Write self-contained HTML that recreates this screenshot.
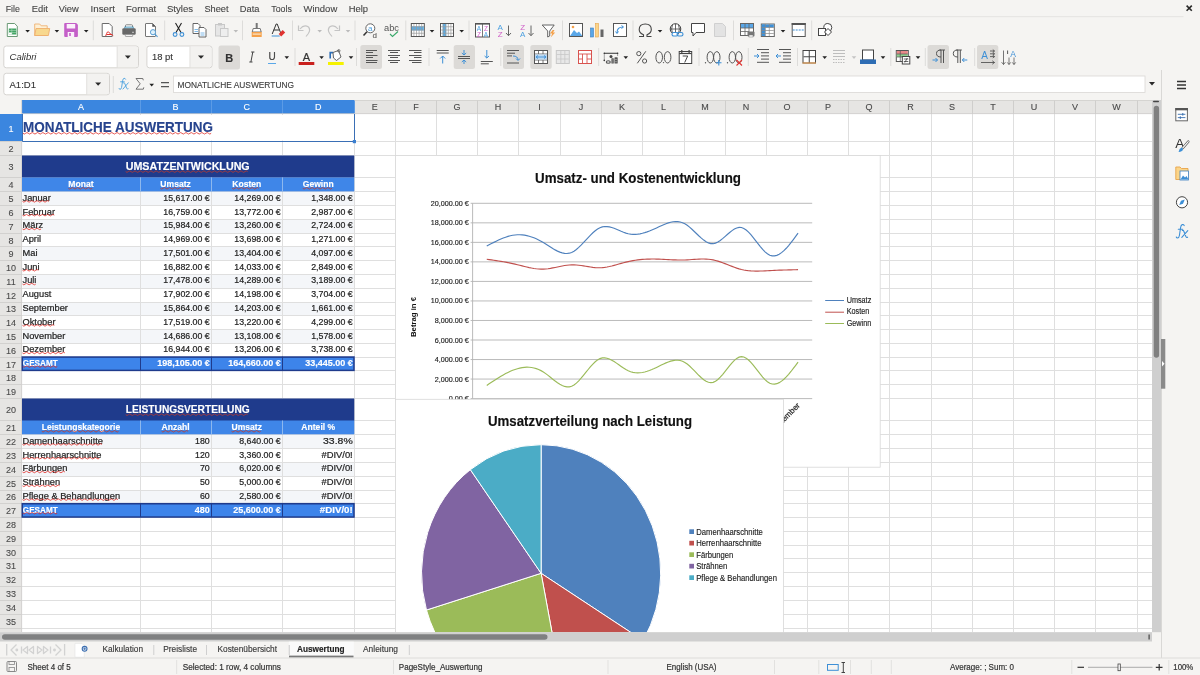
<!DOCTYPE html>
<html><head><meta charset="utf-8"><style>
html,body{margin:0;padding:0;background:#f5f4f2;}
body{width:1200px;height:675px;overflow:hidden;}
svg{display:block;font-family:"Liberation Sans",sans-serif;will-change:transform;}
</style></head><body>
<svg width="1200" height="675" viewBox="0 0 1200 675">
<rect x="0.00" y="0.00" width="1200.00" height="675.00" fill="#f5f4f2" />
<text x="5.70" y="11.70" font-size="8.8" fill="#454545" text-anchor="start" stroke="#454545" stroke-width="0.1" >File</text>
<text x="31.70" y="11.70" font-size="8.8" fill="#454545" text-anchor="start" textLength="16.20" lengthAdjust="spacingAndGlyphs" stroke="#454545" stroke-width="0.1" >Edit</text>
<text x="58.75" y="11.70" font-size="8.8" fill="#454545" text-anchor="start" textLength="20.00" lengthAdjust="spacingAndGlyphs" stroke="#454545" stroke-width="0.1" >View</text>
<text x="90.60" y="11.70" font-size="8.8" fill="#454545" text-anchor="start" textLength="24.40" lengthAdjust="spacingAndGlyphs" stroke="#454545" stroke-width="0.1" >Insert</text>
<text x="126.00" y="11.70" font-size="8.8" fill="#454545" text-anchor="start" textLength="30.25" lengthAdjust="spacingAndGlyphs" stroke="#454545" stroke-width="0.1" >Format</text>
<text x="166.90" y="11.70" font-size="8.8" fill="#454545" text-anchor="start" textLength="26.20" lengthAdjust="spacingAndGlyphs" stroke="#454545" stroke-width="0.1" >Styles</text>
<text x="204.40" y="11.70" font-size="8.8" fill="#454545" text-anchor="start" textLength="24.10" lengthAdjust="spacingAndGlyphs" stroke="#454545" stroke-width="0.1" >Sheet</text>
<text x="239.75" y="11.70" font-size="8.8" fill="#454545" text-anchor="start" textLength="19.65" lengthAdjust="spacingAndGlyphs" stroke="#454545" stroke-width="0.1" >Data</text>
<text x="271.25" y="11.70" font-size="8.8" fill="#454545" text-anchor="start" stroke="#454545" stroke-width="0.1" >Tools</text>
<text x="303.50" y="11.70" font-size="8.8" fill="#454545" text-anchor="start" textLength="33.75" lengthAdjust="spacingAndGlyphs" stroke="#454545" stroke-width="0.1" >Window</text>
<text x="348.75" y="11.70" font-size="8.8" fill="#454545" text-anchor="start" textLength="19.35" lengthAdjust="spacingAndGlyphs" stroke="#454545" stroke-width="0.1" >Help</text>
<line x1="0.00" y1="16.70" x2="1183.50" y2="16.70" stroke="#e4e3e1" stroke-width="1" />
<path d="M1186.6,5.6 L1191.8,10.8 M1191.8,5.6 L1186.6,10.8" stroke="#2a2a2a" stroke-width="1.6"/>
<g transform="translate(6.80,23.00) scale(1.0)"><path d="M0.5,0.5 H7.8 L10.5,3.2 V13.5 H0.5 Z" fill="#fff" stroke="#5b8e66" stroke-width="0.9"/><rect x="2" y="5.5" width="7.5" height="6" fill="#43a565"/><path d="M2,7.5 H9.5 M2,9.5 H9.5 M5,5.5 V11.5" stroke="#bfe3c9" stroke-width="0.5"/><rect x="2" y="9.7" width="3" height="1.8" fill="#fff"/></g>
<path d="M25.30,30.00 L29.90,30.00 L27.60,32.60 Z" fill="#222"/>
<g transform="translate(34.20,23.00) scale(1.0)"><path d="M0.5,1 H5.5 L7,2.8 H13 V12.5 H0.5 Z" fill="#fdf0d6" stroke="#efb274" stroke-width="0.9"/><path d="M0.5,12.5 L1.8,5.5 H15.5 L14.2,12.5 Z" fill="#f8d88e" stroke="#eeae6c" stroke-width="0.9"/></g>
<path d="M54.60,30.00 L59.20,30.00 L56.90,32.60 Z" fill="#222"/>
<g transform="translate(64.20,23.00) scale(1.0)"><path d="M0,1 Q0,0 1,0 H12 L13.7,1.7 V13 Q13.7,14 12.7,14 H1 Q0,14 0,13 Z" fill="#c45fc8"/><rect x="2.5" y="1" width="8.5" height="4.5" fill="#fbeffb"/><rect x="3.5" y="9" width="6.5" height="5" fill="#fbeffb"/><rect x="5" y="10" width="1.6" height="3" fill="#c45fc8"/></g>
<path d="M83.90,30.00 L88.50,30.00 L86.20,32.60 Z" fill="#222"/>
<line x1="93.30" y1="20.50" x2="93.30" y2="40.20" stroke="#dddcda" stroke-width="1" />
<g transform="translate(101.70,23.00) scale(1.0)"><path d="M0.5,0.5 H7.5 L10.5,3.5 V13.5 H0.5 Z" fill="#fff" stroke="#6b6b6b" stroke-width="1"/><path d="M4,13 Q6,7 7,9 Q8,11 11.5,12.5 M5,11.5 H10" stroke="#e0322f" stroke-width="1" fill="none"/></g>
<g transform="translate(122.00,23.00) scale(1.0)"><rect x="3.5" y="1.8" width="7" height="4.5" rx="0.8" fill="#fff" stroke="#777" stroke-width="0.9"/><rect x="2.8" y="4" width="8.4" height="2.2" fill="#bfe6f7" stroke="#2f7fa8" stroke-width="0.7"/><rect x="0.3" y="5.2" width="13.4" height="6.6" rx="1.2" fill="#686868"/><rect x="10.3" y="8.8" width="1.4" height="0.9" fill="#fff"/><rect x="3.3" y="11.5" width="7.4" height="2" rx="0.6" fill="#f3f3f3" stroke="#888" stroke-width="0.7"/></g>
<g transform="translate(145.00,23.00) scale(1.0)"><path d="M0.5,1 Q0.5,0.5 1,0.5 H7.5 L10.5,3.5 V13 Q10.5,13.5 10,13.5 H1 Q0.5,13.5 0.5,13 Z" fill="#fff" stroke="#666" stroke-width="0.9"/><path d="M7.5,0.5 V3.5 H10.5" fill="#555" stroke="#666" stroke-width="0.6"/><circle cx="8" cy="9.2" r="2.6" fill="#dff1fb" stroke="#5a9fd4" stroke-width="1"/><path d="M9.9,11.1 L12.6,13.8" stroke="#5a9fd4" stroke-width="1.2"/></g>
<line x1="164.70" y1="20.50" x2="164.70" y2="40.20" stroke="#dddcda" stroke-width="1" />
<g transform="translate(172.50,23.00) scale(1.0)"><path d="M3,0 L8.5,9.5 M9,0 L3.5,9.5" stroke="#222" stroke-width="1.1" fill="none"/><circle cx="2.6" cy="11.5" r="1.9" fill="none" stroke="#3d8fd6" stroke-width="1.1"/><circle cx="9.4" cy="11.5" r="1.9" fill="none" stroke="#3d8fd6" stroke-width="1.1"/></g>
<g transform="translate(192.50,23.00) scale(1.0)"><path d="M0.5,0.5 H5.5 L7.5,2.5 V10.5 H0.5 Z" fill="#fff" stroke="#555" stroke-width="0.9"/><path d="M6.5,4.5 H11.5 L13.5,6.5 V14 H6.5 Z" fill="#fff" stroke="#555" stroke-width="0.9"/><path d="M2,6.5 H5.5 M2,8.5 H5.5 M8,10 H12 M8,12 H12" stroke="#4a9fe0" stroke-width="0.7"/></g>
<g transform="translate(215.00,23.00) scale(1.0)"><rect x="0.5" y="1.5" width="9" height="11.5" fill="#e6e6e6" stroke="#c8c8c8"/><rect x="5.5" y="5.5" width="7.5" height="8" fill="#eee" stroke="#c8c8c8"/><rect x="3" y="0" width="4" height="2.5" fill="#c8c8c8"/></g>
<path d="M233.50,30.00 L238.10,30.00 L235.80,32.60 Z" fill="#bbb"/>
<line x1="242.50" y1="20.50" x2="242.50" y2="40.20" stroke="#dddcda" stroke-width="1" />
<g transform="translate(251.70,23.00) scale(1.0)"><rect x="4" y="0" width="2" height="5" fill="#777"/><path d="M1.5,5.5 H8.5 L9.5,9 H0.5 Z" fill="#fff" stroke="#666" stroke-width="0.9"/><rect x="0" y="9" width="10" height="5" fill="#f5a14a"/><rect x="1" y="10.5" width="8" height="1.2" fill="#fde6c8"/></g>
<g transform="translate(271.70,23.00) scale(1.0)"><path d="M0.5,11 L4.5,1 H5.5 L9,10 M2,7 H7.5" stroke="#333" stroke-width="1" fill="none"/><path d="M0,13 H8" stroke="#3d8fd6" stroke-width="1"/><path d="M7,11 L11,7 L13.5,9.5 L9.5,13.5 Z" fill="#e0322f"/></g>
<line x1="292.50" y1="20.50" x2="292.50" y2="40.20" stroke="#dddcda" stroke-width="1" />
<g transform="translate(298.00,24.00) scale(1.0)"><path d="M2,5 Q6,0 10.5,3 Q13,6 10,10 L8,12.5" fill="none" stroke="#c4c4c4" stroke-width="1.2"/><path d="M0.5,1.5 V6.5 H5.5" fill="none" stroke="#c4c4c4" stroke-width="1.2"/></g>
<path d="M317.40,30.00 L322.00,30.00 L319.70,32.60 Z" fill="#bbb"/>
<g transform="translate(328.00,24.00) scale(1.0)"><path d="M10,5 Q6,0 1.5,3 Q-1,6 2,10 L4,12.5" fill="none" stroke="#c4c4c4" stroke-width="1.2"/><path d="M11.5,1.5 V6.5 H6.5" fill="none" stroke="#c4c4c4" stroke-width="1.2"/></g>
<path d="M345.70,30.00 L350.30,30.00 L348.00,32.60 Z" fill="#bbb"/>
<line x1="355.00" y1="20.50" x2="355.00" y2="40.20" stroke="#dddcda" stroke-width="1" />
<g transform="translate(363.00,23.00) scale(1.0)"><circle cx="7.3" cy="5.3" r="4.5" fill="#fff" stroke="#555" stroke-width="0.9"/><path d="M4,8.8 L0.5,12.5" stroke="#333" stroke-width="1.5"/><text x="7.3" y="8" font-size="8" fill="#4a9fe0" text-anchor="middle">a</text><text x="9.6" y="14.5" font-size="8" fill="#444">d</text></g>
<g transform="translate(384.00,23.00) scale(1.0)"><text x="0" y="7.5" font-size="9" fill="#555" textLength="15" lengthAdjust="spacingAndGlyphs">abc</text><path d="M6,11 L8.5,13.5 L14,8.5" stroke="#3aa86a" stroke-width="1.1" fill="none"/></g>
<line x1="405.80" y1="20.50" x2="405.80" y2="40.20" stroke="#dddcda" stroke-width="1" />
<g transform="translate(410.80,23.00) scale(1.0)"><rect x="0.5" y="0.5" width="13" height="13" fill="#fff" stroke="#555"/><rect x="1" y="3.3" width="12" height="4.2" fill="#5aaee8"/><path d="M1,3.75 H13" stroke="#9a9a9a" stroke-width="0.7"/><path d="M1,7.00 H13" stroke="#9a9a9a" stroke-width="0.7"/><path d="M1,10.25 H13" stroke="#9a9a9a" stroke-width="0.7"/><path d="M3.10,1 V13" stroke="#9a9a9a" stroke-width="0.7"/><path d="M5.70,1 V13" stroke="#9a9a9a" stroke-width="0.7"/><path d="M8.30,1 V13" stroke="#9a9a9a" stroke-width="0.7"/><path d="M10.90,1 V13" stroke="#9a9a9a" stroke-width="0.7"/></g>
<path d="M429.70,30.00 L434.30,30.00 L432.00,32.60 Z" fill="#222"/>
<g transform="translate(440.00,23.00) scale(1.0)"><rect x="0.5" y="0.5" width="13" height="13" fill="#fff" stroke="#555"/><rect x="2.7" y="1" width="3.6" height="12" fill="#5aaee8"/><path d="M1,3.75 H13" stroke="#9a9a9a" stroke-width="0.7"/><path d="M1,7.00 H13" stroke="#9a9a9a" stroke-width="0.7"/><path d="M1,10.25 H13" stroke="#9a9a9a" stroke-width="0.7"/><path d="M3.10,1 V13" stroke="#9a9a9a" stroke-width="0.7"/><path d="M5.70,1 V13" stroke="#9a9a9a" stroke-width="0.7"/><path d="M8.30,1 V13" stroke="#9a9a9a" stroke-width="0.7"/><path d="M10.90,1 V13" stroke="#9a9a9a" stroke-width="0.7"/></g>
<path d="M459.40,30.00 L464.00,30.00 L461.70,32.60 Z" fill="#222"/>
<line x1="469.00" y1="20.50" x2="469.00" y2="40.20" stroke="#dddcda" stroke-width="1" />
<g transform="translate(475.00,23.00) scale(1.0)"><rect x="0.5" y="0.5" width="14" height="13.5" fill="#fff" stroke="#555"/><rect x="0" y="0" width="15" height="1.6" fill="#555"/><path d="M7.5,1 V14" stroke="#555" stroke-width="0.8"/><text x="4" y="7.8" font-size="6.5" fill="#4a9fe0" text-anchor="middle">A</text><text x="4" y="13.5" font-size="6.5" fill="#d060c8" text-anchor="middle">Z</text><text x="11" y="7.8" font-size="6.5" fill="#d060c8" text-anchor="middle">Z</text><text x="11" y="13.5" font-size="6.5" fill="#4a9fe0" text-anchor="middle">A</text></g>
<g transform="translate(497.50,23.00) scale(1.0)"><text x="0" y="6.5" font-size="8" fill="#4a9fe0">A</text><text x="0.3" y="13.5" font-size="8" fill="#d060c8">Z</text><path d="M11,2.5 V12.5 M8.5,10 L11,12.7 L13.5,10" stroke="#555" stroke-width="0.9" fill="none"/></g>
<g transform="translate(520.00,23.00) scale(1.0)"><text x="0.3" y="6.5" font-size="8" fill="#d060c8">Z</text><text x="0" y="13.5" font-size="8" fill="#4a9fe0">A</text><path d="M11,2.5 V12.5 M8.5,10 L11,12.7 L13.5,10" stroke="#555" stroke-width="0.9" fill="none"/></g>
<g transform="translate(541.70,23.00) scale(1.0)"><path d="M0.5,2 H12.5 L8,8 V13 L6,14 V8 Z" fill="#fff" stroke="#555" stroke-width="0.9" stroke-linejoin="round"/><path d="M11,7 L8.3,10.5 H10.5 L9,14.5 L13.5,9.5 H11.3 L12.8,7 Z" fill="#f5a14a"/></g>
<line x1="562.50" y1="20.50" x2="562.50" y2="40.20" stroke="#dddcda" stroke-width="1" />
<g transform="translate(569.00,23.00) scale(1.0)"><rect x="0.5" y="0.5" width="13" height="13" fill="#fff" stroke="#555"/><path d="M1,13 L5,7 L8,10 L10,8.5 L13,12.5 V13 Z" fill="#5aa7e8"/><circle cx="4" cy="4" r="1.3" fill="#f5a14a"/></g>
<g transform="translate(590.00,23.00) scale(1.0)"><rect x="0.5" y="5" width="3" height="9" fill="#5aa7e8" stroke="#3d7fc0" stroke-width="0.6"/><rect x="5.5" y="0.5" width="3" height="13.5" fill="#fbd58a" stroke="#e8a44a" stroke-width="0.6"/><rect x="10.5" y="6.5" width="3" height="7.5" fill="#666"/></g>
<g transform="translate(613.00,23.00) scale(1.0)"><rect x="0.5" y="0.5" width="13" height="13" fill="#fff" stroke="#555"/><path d="M4,10 Q4,4 10,4" stroke="#3d8fd6" stroke-width="1.1" fill="none"/><path d="M8.5,2.5 L10.5,4 L8.5,5.5 M2.5,8.5 L4,10.5 L5.5,8.5" stroke="#3d8fd6" stroke-width="1" fill="none"/></g>
<line x1="633.00" y1="20.50" x2="633.00" y2="40.20" stroke="#dddcda" stroke-width="1" />
<g transform="translate(638.00,23.00) scale(1.0)"><path d="M1,13.5 H5.5 V11.8 Q1.2,10 1.2,6.5 Q1.2,1 7.3,1 Q13.3,1 13.3,6.5 Q13.3,10 9,11.8 V13.5 H13.5" fill="none" stroke="#444" stroke-width="1.1"/></g>
<path d="M657.70,30.00 L662.30,30.00 L660.00,32.60 Z" fill="#222"/>
<g transform="translate(669.00,23.00) scale(1.0)"><circle cx="6.5" cy="6" r="5.3" fill="#fff" stroke="#444" stroke-width="1"/><path d="M1.2,6 H11.8 M6.5,0.7 V11.3 M3.5,1.7 Q1.8,6 3.5,10.3 M9.5,1.7 Q11.2,6 9.5,10.3" stroke="#444" stroke-width="0.8" fill="none"/><rect x="3" y="9.5" width="6" height="3.5" rx="1.7" fill="#fff" stroke="#3d8fd6" stroke-width="1.1"/><rect x="8" y="9.5" width="6" height="3.5" rx="1.7" fill="none" stroke="#3d8fd6" stroke-width="1.1"/></g>
<g transform="translate(691.00,23.00) scale(1.0)"><path d="M0.5,0.5 H13.5 V9.5 H5 L2,13 V9.5 H0.5 Z" fill="#fff" stroke="#444" stroke-width="1"/></g>
<g transform="translate(714.00,23.00) scale(1.0)"><path d="M0.5,0.5 H8.5 L11.5,3.5 V13.5 H0.5 Z" fill="#e3e3e3" stroke="#d0d0d0"/></g>
<line x1="733.50" y1="20.50" x2="733.50" y2="40.20" stroke="#dddcda" stroke-width="1" />
<g transform="translate(740.00,23.00) scale(1.0)"><rect x="0.5" y="0.5" width="13" height="12" fill="#fff" stroke="#666"/><rect x="1" y="1" width="12" height="4" fill="#5aa7e8"/><path d="M1,5 H13 M1,8.5 H9 M5,1 V12.5 M9,1 V12.5" stroke="#666" stroke-width="0.8"/><rect x="7.5" y="8.5" width="7" height="5" rx="1" fill="#777"/><rect x="9" y="12" width="4" height="2" fill="#fff" stroke="#777" stroke-width="0.5"/></g>
<g transform="translate(760.80,23.00) scale(1.0)"><rect x="0.5" y="1" width="13" height="12.5" fill="#fff" stroke="#666"/><rect x="1" y="1.5" width="3.5" height="11.5" fill="#3d8fd6"/><rect x="1" y="1.5" width="12" height="3" fill="#3d8fd6"/><path d="M1,4.5 H13 M1,7.5 H13 M1,10.5 H13 M4.5,1 V13 M8.5,1 V13" stroke="#888" stroke-width="0.7"/></g>
<path d="M780.70,30.00 L785.30,30.00 L783.00,32.60 Z" fill="#222"/>
<g transform="translate(791.70,23.00) scale(1.0)"><rect x="0.5" y="0.5" width="13" height="13" fill="#fff" stroke="#555"/><rect x="0" y="0" width="14" height="2" fill="#555"/><path d="M1,7 H13" stroke="#3d8fd6" stroke-width="1" stroke-dasharray="2,1"/></g>
<line x1="811.70" y1="20.50" x2="811.70" y2="40.20" stroke="#dddcda" stroke-width="1" />
<g transform="translate(818.00,23.00) scale(1.0)"><circle cx="9.8" cy="4.5" r="4" fill="#fff" stroke="#444"/><rect x="0.5" y="5.5" width="7" height="7" fill="#fff" stroke="#444"/><path d="M10,5.5 L13.5,9 L10,12.5 L6.5,9 Z" fill="#fff" stroke="#444"/></g>
<rect x="3.80" y="46.00" width="134.70" height="21.80" rx="2.5" fill="#fff" stroke="#d6d4d1"/>
<path d="M117.70,46.50 H136.00 Q138,46.5 138,48.5 V65.3 Q138,67.3 136,67.3 H117.70 Z" fill="#f3f2f0"/>
<line x1="117.20" y1="46.50" x2="117.20" y2="67.30" stroke="#dedcd9" stroke-width="1" />
<path d="M124.85,55.40 H130.85 L127.85,58.70 Z" fill="#2a2a2a"/>
<text x="9.5" y="60" font-size="9" font-style="italic" fill="#333" textLength="27" lengthAdjust="spacingAndGlyphs">Calibri</text>
<rect x="146.90" y="46.00" width="65.10" height="21.80" rx="2.5" fill="#fff" stroke="#d6d4d1"/>
<path d="M190.50,46.50 H209.50 Q211.5,46.5 211.5,48.5 V65.3 Q211.5,67.3 209.5,67.3 H190.50 Z" fill="#f3f2f0"/>
<line x1="190.00" y1="46.50" x2="190.00" y2="67.30" stroke="#dedcd9" stroke-width="1" />
<path d="M198.00,55.40 H204.00 L201.00,58.70 Z" fill="#2a2a2a"/>
<text x="152.00" y="60.00" font-size="9" fill="#333" text-anchor="start" textLength="21.00" lengthAdjust="spacingAndGlyphs" stroke="#333" stroke-width="0.1" >18 pt</text>
<rect x="218.50" y="45.50" width="21.50" height="23.90" rx="2.5" fill="#dcdad7"/>
<text x="229.20" y="61.50" font-size="11" fill="#333" font-weight="bold" text-anchor="middle" stroke="#333" stroke-width="0.15" >B</text>
<path d="M249.3,62 H252.5 M251.2,52 H254.4 M252.8,52 L250.9,62" stroke="#444" stroke-width="1" fill="none"/>
<text x="272.00" y="60.20" font-size="10" fill="#444" text-anchor="middle" stroke="#444" stroke-width="0.2" >U</text>
<line x1="268.00" y1="63.50" x2="276.00" y2="63.50" stroke="#5aa7e8" stroke-width="1" />
<path d="M284.50,56.30 L289.10,56.30 L286.80,58.90 Z" fill="#222"/>
<line x1="295.00" y1="48.00" x2="295.00" y2="66.00" stroke="#dddcda" stroke-width="1" />
<text x="306.50" y="61.00" font-size="11" fill="#333" text-anchor="middle" stroke="#333" stroke-width="0.2" >A</text>
<rect x="298.70" y="62.00" width="15.60" height="3.00" fill="#c9211e" />
<path d="M319.30,56.30 L323.90,56.30 L321.60,58.90 Z" fill="#222"/>
<g transform="translate(328.00,49.00) scale(1.0)"><path d="M2.2,9.5 V3.6 H5" fill="none" stroke="#2f6fb8" stroke-width="1.6"/><path d="M5,3.5 L10.5,1.5 L13,8 L8.5,11.5 L5.5,9 Z" fill="#fff" stroke="#555" stroke-width="0.9" stroke-linejoin="round"/><circle cx="10.8" cy="1.8" r="1.2" fill="none" stroke="#555" stroke-width="0.8"/></g>
<rect x="328.00" y="62.00" width="15.70" height="3.00" fill="#f5f200" />
<path d="M348.70,56.30 L353.30,56.30 L351.00,58.90 Z" fill="#222"/>
<line x1="356.50" y1="48.00" x2="356.50" y2="66.00" stroke="#dddcda" stroke-width="1" />
<rect x="360.30" y="45.00" width="21.70" height="24.00" rx="2.5" fill="#dcdad7"/>
<g transform="translate(366.00,50.00) scale(1.0)"><rect x="0" y="0" width="11" height="1" fill="#555"/><rect x="0" y="2" width="7" height="1" fill="#555"/><rect x="0" y="5" width="11.5" height="1" fill="#555"/><rect x="0" y="7" width="7" height="1" fill="#555"/><rect x="0" y="10" width="11.5" height="1" fill="#555"/><rect x="0" y="12" width="11" height="1" fill="#555"/></g>
<g transform="translate(388.00,50.00) scale(1.0)"><rect x="0" y="0" width="12" height="1" fill="#555"/><rect x="2" y="2" width="8" height="1" fill="#555"/><rect x="0" y="5" width="12" height="1" fill="#555"/><rect x="2" y="7" width="8" height="1" fill="#555"/><rect x="0" y="10" width="12" height="1" fill="#555"/><rect x="2" y="12" width="8" height="1" fill="#555"/></g>
<g transform="translate(409.00,50.00) scale(1.0)"><rect x="0" y="0" width="12.5" height="1" fill="#555"/><rect x="5" y="2" width="7.5" height="1" fill="#555"/><rect x="0" y="5" width="12.5" height="1" fill="#555"/><rect x="5" y="7" width="7.5" height="1" fill="#555"/><rect x="0" y="10" width="12.5" height="1" fill="#555"/><rect x="3" y="12" width="9.5" height="1" fill="#555"/></g>
<line x1="429.00" y1="48.00" x2="429.00" y2="66.00" stroke="#dddcda" stroke-width="1" />
<g transform="translate(436.70,50.00) scale(1.0)"><rect x="0" y="0" width="12" height="1" fill="#555"/><rect x="0" y="2.5" width="12" height="1" fill="#555"/><path d="M6,13.5 V6 M3.5,8.5 L6,6 L8.5,8.5" stroke="#3d8fd6" stroke-width="1" fill="none"/></g>
<rect x="453.70" y="45.00" width="21.30" height="24.00" rx="2.5" fill="#dcdad7"/>
<g transform="translate(458.00,50.00) scale(1.0)"><rect x="0" y="6" width="12" height="1" fill="#555"/><rect x="0" y="8" width="12" height="1" fill="#555"/><path d="M6,0 V5 M3.8,3 L6,5 L8.2,3 M6,14 V10 M3.8,12 L6,10 L8.2,12" stroke="#3d8fd6" stroke-width="1" fill="none"/></g>
<g transform="translate(480.80,50.00) scale(1.0)"><rect x="0" y="11" width="12" height="1" fill="#555"/><rect x="0" y="13.3" width="8" height="1" fill="#555"/><path d="M6,0 V8 M3.8,6 L6,8 L8.2,6" stroke="#3d8fd6" stroke-width="1" fill="none"/></g>
<line x1="500.80" y1="48.00" x2="500.80" y2="66.00" stroke="#dddcda" stroke-width="1" />
<rect x="503.00" y="45.00" width="21.00" height="24.00" rx="2.5" fill="#dcdad7"/>
<g transform="translate(507.00,50.00) scale(1.0)"><rect x="0" y="0" width="12" height="1" fill="#555"/><rect x="0" y="2.7" width="8" height="1" fill="#555"/><rect x="0" y="5.4" width="5" height="1" fill="#555"/><path d="M6,6 Q11,6 11,10 M9,8.5 L11,10.5 L13,8.5" stroke="#3d8fd6" stroke-width="1" fill="none"/><rect x="0" y="12.5" width="12" height="1" fill="#555"/></g>
<rect x="530.30" y="45.00" width="21.40" height="24.00" rx="2.5" fill="#dcdad7"/>
<g transform="translate(534.00,50.00) scale(1.0)"><rect x="0.5" y="0.5" width="13" height="13" fill="#fff" stroke="#555"/><path d="M1,4 H13 M1,10 H13 M4.5,1 V4 M9,1 V4 M4.5,10 V13 M9,10 V13" stroke="#555" stroke-width="0.8"/><rect x="1" y="4.5" width="12" height="5" fill="#bcd9f3"/><path d="M2,7 H12 M2,7 L4,5.5 M2,7 L4,8.5 M12,7 L10,5.5 M12,7 L10,8.5" stroke="#3d8fd6" stroke-width="0.9" fill="none"/></g>
<g transform="translate(555.80,50.00) scale(1.0)"><rect x="0.5" y="0.5" width="13" height="13" fill="#e8e8e8" stroke="#c8c8c8"/><path d="M1,4.5 H13 M1,9 H13 M5,1 V13 M9,1 V13" stroke="#c8c8c8" stroke-width="0.8"/></g>
<g transform="translate(578.00,50.00) scale(1.0)"><rect x="0.5" y="0.5" width="13" height="13" fill="#fff" stroke="#d9534f"/><path d="M1,4 H13 M4.5,4 V13 M9,4 V13 M1,9 H4.5 M9,9 H13" stroke="#d9534f" stroke-width="0.9"/></g>
<line x1="598.70" y1="48.00" x2="598.70" y2="66.00" stroke="#dddcda" stroke-width="1" />
<path d="M604.3,61 V53.3 H617.6 V56" fill="none" stroke="#999" stroke-width="0.9"/><path d="M604.3,53.3 H617.6" stroke="#444" stroke-width="0.9"/><circle cx="604.3" cy="53.3" r="0.8" fill="#333"/><circle cx="617.6" cy="53.3" r="0.8" fill="#333"/><circle cx="604.3" cy="60.4" r="0.8" fill="#333"/><circle cx="611" cy="56.6" r="1.5" fill="#444"/><ellipse cx="608.3" cy="62" rx="2" ry="1.3" fill="#eee" stroke="#555" stroke-width="1.1"/><rect x="611.4" y="58.3" width="2.4" height="5.3" rx="0.5" fill="#555"/><rect x="614.5" y="57.3" width="3.2" height="6.3" rx="0.6" fill="#555"/><path d="M611.8,60 H613.4 M611.8,62 H613.4 M615,59.5 H617.2 M615,61.7 H617.2" stroke="#bbb" stroke-width="0.6"/>
<path d="M623.50,56.30 L628.10,56.30 L625.80,58.90 Z" fill="#222"/>
<g fill="none" stroke="#555" stroke-width="1"><circle cx="638.8" cy="53.6" r="2.1"/><circle cx="644.6" cy="61" r="2.1"/><path d="M645.8,51.3 L637.3,63.3"/></g>
<g fill="none" stroke="#555" stroke-width="1"><ellipse cx="659.2" cy="57.3" rx="3.3" ry="5.7"/><ellipse cx="667.6" cy="57.3" rx="3.3" ry="5.7"/></g><circle cx="663.5" cy="62.6" r="0.7" fill="#555"/>
<g transform="translate(678.70,49.50) scale(1.0)"><rect x="0.5" y="2" width="12.5" height="12" fill="#fff" stroke="#444"/><path d="M0.5,4 H13" stroke="#444" stroke-width="1.2"/><rect x="2.5" y="0.5" width="1.2" height="3" fill="#444"/><rect x="9.8" y="0.5" width="1.2" height="3" fill="#444"/><path d="M4,6.5 H9 L6,13" stroke="#444" stroke-width="1" fill="none"/></g>
<line x1="699.00" y1="48.00" x2="699.00" y2="66.00" stroke="#dddcda" stroke-width="1" />
<circle cx="705.5" cy="62.8" r="0.7" fill="#555"/><g fill="none" stroke="#555" stroke-width="1"><ellipse cx="710.3" cy="57.3" rx="3.2" ry="5.7"/><ellipse cx="716.8" cy="57.3" rx="3.2" ry="5.7"/></g><path d="M718.8,60 V65.5 M716,62.8 H721.5" stroke="#3d8fd6" stroke-width="1.1"/>
<circle cx="727.5" cy="62.8" r="0.7" fill="#555"/><g fill="none" stroke="#555" stroke-width="1"><ellipse cx="732.3" cy="57.3" rx="3.2" ry="5.7"/><ellipse cx="738.8" cy="57.3" rx="3.2" ry="5.7"/></g><path d="M736.5,60 L742,65.5 M742,60 L736.5,65.5" stroke="#e0322f" stroke-width="1.1"/>
<line x1="748.30" y1="48.00" x2="748.30" y2="66.00" stroke="#dddcda" stroke-width="1" />
<g transform="translate(754.00,49.00) scale(1.0)"><rect x="3" y="0" width="12" height="1" fill="#555"/><rect x="7" y="3.2" width="8" height="1" fill="#555"/><rect x="7" y="6.4" width="8" height="1" fill="#555"/><rect x="7" y="9.6" width="8" height="1" fill="#555"/><rect x="3" y="12.8" width="12" height="1" fill="#555"/><path d="M0,7 H5 M3,5 L5,7 L3,9" stroke="#3d8fd6" stroke-width="1" fill="none"/></g>
<g transform="translate(776.00,49.00) scale(1.0)"><rect x="3" y="0" width="12" height="1" fill="#555"/><rect x="7" y="3.2" width="8" height="1" fill="#555"/><rect x="7" y="6.4" width="8" height="1" fill="#555"/><rect x="7" y="9.6" width="8" height="1" fill="#555"/><rect x="3" y="12.8" width="12" height="1" fill="#555"/><path d="M0,7 H5 M2,5 L0,7 L2,9" stroke="#3d8fd6" stroke-width="1" fill="none"/></g>
<line x1="797.50" y1="48.00" x2="797.50" y2="66.00" stroke="#dddcda" stroke-width="1" />
<g transform="translate(802.50,50.00) scale(1.0)"><rect x="0.5" y="0.5" width="12.5" height="12.5" fill="#fff" stroke="#444"/><path d="M6.75,1 V13 M1,6.75 H13" stroke="#444" stroke-width="1"/><rect x="0" y="12.5" width="13.5" height="1" fill="#f5a14a"/></g>
<path d="M822.40,56.30 L827.00,56.30 L824.70,58.90 Z" fill="#222"/>
<g transform="translate(833.00,50.00) scale(1.0)"><path d="M0,0.5 H12 M0,3.5 H12 M0,6.5 H12" stroke="#bdbdbd" stroke-width="1"/><path d="M0,9.5 H12 M0,12.5 H12" stroke="#bdbdbd" stroke-width="1" stroke-dasharray="1.5,1"/></g>
<path d="M851.70,56.30 L856.30,56.30 L854.00,58.90 Z" fill="#c4c4c4"/>
<g transform="translate(860.00,49.50) scale(1.0)"><rect x="2.5" y="0.5" width="11" height="10" fill="#fff" stroke="#444"/><rect x="0" y="10" width="16" height="4.5" fill="#2e6db4"/></g>
<path d="M880.70,56.30 L885.30,56.30 L883.00,58.90 Z" fill="#222"/>
<line x1="890.80" y1="48.00" x2="890.80" y2="66.00" stroke="#dddcda" stroke-width="1" />
<g transform="translate(895.80,50.00) scale(1.0)"><rect x="0.5" y="0.5" width="12" height="11" fill="#fff" stroke="#555"/><rect x="1" y="1" width="11" height="3" fill="#e88a8a"/><rect x="1" y="4" width="11" height="3" fill="#8fcf8f"/><path d="M1,4 H12 M1,7 H12 M4.5,1 V11.5" stroke="#555" stroke-width="0.7"/><rect x="6.5" y="6.5" width="7.5" height="7.5" fill="#fff" stroke="#444"/><path d="M8,9 H12.5 M8,11.5 H12.5 M11.5,8 L9,12.5" stroke="#444" stroke-width="0.8"/></g>
<path d="M915.70,56.30 L920.30,56.30 L918.00,58.90 Z" fill="#222"/>
<line x1="925.30" y1="48.00" x2="925.30" y2="66.00" stroke="#dddcda" stroke-width="1" />
<rect x="927.50" y="45.00" width="21.50" height="24.00" rx="2.5" fill="#dcdad7"/>
<g transform="translate(932.50,49.00) scale(1.0)"><path d="M7,1 H12.5 M8.5,1 V14 M11,1 V14 M8.5,1 Q4,1 4,4.5 Q4,8 8.5,8" stroke="#555" stroke-width="1" fill="none"/><path d="M0,11 H5 M3,9 L5,11 L3,13" stroke="#3d8fd6" stroke-width="1" fill="none"/></g>
<g transform="translate(953.30,49.00) scale(1.0)"><path d="M3,1 H8.5 M4.5,1 V14 M7,1 V14 M4.5,1 Q0,1 0,4.5 Q0,8 4.5,8" stroke="#555" stroke-width="1" fill="none"/><path d="M9,11 H14 M11,9 L9,11 L11,13" stroke="#3d8fd6" stroke-width="1" fill="none"/></g>
<line x1="974.70" y1="48.00" x2="974.70" y2="66.00" stroke="#dddcda" stroke-width="1" />
<rect x="977.00" y="45.00" width="21.30" height="24.00" rx="2.5" fill="#dcdad7"/>
<text x="984.50" y="58.50" font-size="10" fill="#3d8fd6" text-anchor="middle" >A</text>
<path d="M990,51 H994.5 M992.8,49.6 L994.5,51 L992.8,52.4 M990,53.8 H994.5 M992.8,52.4 L994.5,53.8 L992.8,55.2 M990,56.6 H994.5 M992.8,55.2 L994.5,56.6 L992.8,58 M981,62.5 H994.5 M992.3,60.8 L994.5,62.5 L992.3,64.2" stroke="#444" stroke-width="0.8" fill="none"/>
<path d="M1003.5,50.5 V64.5 M1001.6,62.2 L1003.5,64.5 L1005.4,62.2 M1009,57.5 V64.5 M1007.3,62.4 L1009,64.5 L1010.7,62.4 M1014,57.5 V64.5 M1012.3,62.4 L1014,64.5 L1015.7,62.4" stroke="#555" stroke-width="0.8" fill="none"/><path d="M1007.6,50.5 V54" stroke="#444" stroke-width="0.9"/>
<text x="1013.00" y="57.00" font-size="8.5" fill="#3d8fd6" text-anchor="middle" >A</text>
<rect x="3.80" y="73.30" width="105.70" height="21.50" rx="2.5" fill="#fff" stroke="#d6d4d1"/>
<path d="M87.30,73.80 H107.00 Q109,73.8 109,75.8 V92.3 Q109,94.3 107,94.3 H87.30 Z" fill="#f3f2f0"/>
<line x1="86.80" y1="73.80" x2="86.80" y2="94.30" stroke="#dedcd9" stroke-width="1" />
<path d="M95.15,82.55 H101.15 L98.15,85.85 Z" fill="#2a2a2a"/>
<text x="9.50" y="87.60" font-size="9" fill="#333" text-anchor="start" textLength="26.50" lengthAdjust="spacingAndGlyphs" stroke="#333" stroke-width="0.1" >A1:D1</text>
<line x1="113.30" y1="76.00" x2="113.30" y2="93.00" stroke="#dddcda" stroke-width="1" />
<g fill="none" stroke="#4ea3df" stroke-width="0.95" stroke-linecap="round"><path d="M125.6,79.2 Q125.1,78 124,78.3 Q122.9,78.7 122.6,80.8 L121.6,87.4 Q121.2,89.4 120,89.4 Q119.3,89.4 119.1,88.6"/><path d="M120.6,81.8 H124.3"/><path d="M123.5,82.8 Q124.3,82.4 124.7,83.3 L126.7,88.4 Q127.1,89.3 128.1,88.8 M128.3,82.8 L123,89"/></g>
<path d="M143.3,80.3 L142.8,78.5 H136 L140.2,83.8 L136,89.2 H143.3 L143.8,87.3" stroke="#555" stroke-width="0.8" fill="none" stroke-linejoin="round"/>
<path d="M149.40,83.80 L154.00,83.80 L151.70,86.40 Z" fill="#222"/>
<path d="M161,82.6 H169 M161,86.6 H169" stroke="#555" stroke-width="1.25"/>
<rect x="173.5" y="76" width="971.5" height="16.5" fill="#fff" stroke="#dad8d5" stroke-width="0.8"/>
<text x="177.50" y="87.60" font-size="8.6" fill="#3a3a3a" text-anchor="start" textLength="116.50" lengthAdjust="spacingAndGlyphs" stroke="#3a3a3a" stroke-width="0.1" >MONATLICHE AUSWERTUNG</text>
<path d="M1149,82 H1155 L1152,85.5 Z" fill="#2a2a2a"/>
<rect x="22.00" y="114.00" width="1130.00" height="518.00" fill="#ffffff" />
<rect x="140.00" y="114.00" width="1.00" height="518.00" fill="#dfdfdf" />
<rect x="211.00" y="114.00" width="1.00" height="518.00" fill="#dfdfdf" />
<rect x="282.00" y="114.00" width="1.00" height="518.00" fill="#dfdfdf" />
<rect x="354.00" y="114.00" width="1.00" height="518.00" fill="#dfdfdf" />
<rect x="395.00" y="114.00" width="1.00" height="518.00" fill="#dfdfdf" />
<rect x="436.00" y="114.00" width="1.00" height="518.00" fill="#dfdfdf" />
<rect x="477.00" y="114.00" width="1.00" height="518.00" fill="#dfdfdf" />
<rect x="518.00" y="114.00" width="1.00" height="518.00" fill="#dfdfdf" />
<rect x="560.00" y="114.00" width="1.00" height="518.00" fill="#dfdfdf" />
<rect x="601.00" y="114.00" width="1.00" height="518.00" fill="#dfdfdf" />
<rect x="642.00" y="114.00" width="1.00" height="518.00" fill="#dfdfdf" />
<rect x="684.00" y="114.00" width="1.00" height="518.00" fill="#dfdfdf" />
<rect x="725.00" y="114.00" width="1.00" height="518.00" fill="#dfdfdf" />
<rect x="766.00" y="114.00" width="1.00" height="518.00" fill="#dfdfdf" />
<rect x="807.00" y="114.00" width="1.00" height="518.00" fill="#dfdfdf" />
<rect x="848.00" y="114.00" width="1.00" height="518.00" fill="#dfdfdf" />
<rect x="889.00" y="114.00" width="1.00" height="518.00" fill="#dfdfdf" />
<rect x="931.00" y="114.00" width="1.00" height="518.00" fill="#dfdfdf" />
<rect x="972.00" y="114.00" width="1.00" height="518.00" fill="#dfdfdf" />
<rect x="1013.00" y="114.00" width="1.00" height="518.00" fill="#dfdfdf" />
<rect x="1054.00" y="114.00" width="1.00" height="518.00" fill="#dfdfdf" />
<rect x="1095.00" y="114.00" width="1.00" height="518.00" fill="#dfdfdf" />
<rect x="1137.00" y="114.00" width="1.00" height="518.00" fill="#dfdfdf" />
<rect x="22.00" y="141.00" width="1130.00" height="1.00" fill="#dfdfdf" />
<rect x="22.00" y="155.00" width="1130.00" height="1.00" fill="#dfdfdf" />
<rect x="22.00" y="177.00" width="1130.00" height="1.00" fill="#dfdfdf" />
<rect x="22.00" y="191.00" width="1130.00" height="1.00" fill="#dfdfdf" />
<rect x="22.00" y="205.00" width="1130.00" height="1.00" fill="#dfdfdf" />
<rect x="22.00" y="219.00" width="1130.00" height="1.00" fill="#dfdfdf" />
<rect x="22.00" y="233.00" width="1130.00" height="1.00" fill="#dfdfdf" />
<rect x="22.00" y="246.00" width="1130.00" height="1.00" fill="#dfdfdf" />
<rect x="22.00" y="260.00" width="1130.00" height="1.00" fill="#dfdfdf" />
<rect x="22.00" y="274.00" width="1130.00" height="1.00" fill="#dfdfdf" />
<rect x="22.00" y="288.00" width="1130.00" height="1.00" fill="#dfdfdf" />
<rect x="22.00" y="302.00" width="1130.00" height="1.00" fill="#dfdfdf" />
<rect x="22.00" y="315.00" width="1130.00" height="1.00" fill="#dfdfdf" />
<rect x="22.00" y="329.00" width="1130.00" height="1.00" fill="#dfdfdf" />
<rect x="22.00" y="343.00" width="1130.00" height="1.00" fill="#dfdfdf" />
<rect x="22.00" y="357.00" width="1130.00" height="1.00" fill="#dfdfdf" />
<rect x="22.00" y="370.00" width="1130.00" height="1.00" fill="#dfdfdf" />
<rect x="22.00" y="384.00" width="1130.00" height="1.00" fill="#dfdfdf" />
<rect x="22.00" y="398.00" width="1130.00" height="1.00" fill="#dfdfdf" />
<rect x="22.00" y="420.00" width="1130.00" height="1.00" fill="#dfdfdf" />
<rect x="22.00" y="434.00" width="1130.00" height="1.00" fill="#dfdfdf" />
<rect x="22.00" y="448.00" width="1130.00" height="1.00" fill="#dfdfdf" />
<rect x="22.00" y="462.00" width="1130.00" height="1.00" fill="#dfdfdf" />
<rect x="22.00" y="476.00" width="1130.00" height="1.00" fill="#dfdfdf" />
<rect x="22.00" y="490.00" width="1130.00" height="1.00" fill="#dfdfdf" />
<rect x="22.00" y="503.00" width="1130.00" height="1.00" fill="#dfdfdf" />
<rect x="22.00" y="517.00" width="1130.00" height="1.00" fill="#dfdfdf" />
<rect x="22.00" y="531.00" width="1130.00" height="1.00" fill="#dfdfdf" />
<rect x="22.00" y="545.00" width="1130.00" height="1.00" fill="#dfdfdf" />
<rect x="22.00" y="558.00" width="1130.00" height="1.00" fill="#dfdfdf" />
<rect x="22.00" y="572.00" width="1130.00" height="1.00" fill="#dfdfdf" />
<rect x="22.00" y="586.00" width="1130.00" height="1.00" fill="#dfdfdf" />
<rect x="22.00" y="600.00" width="1130.00" height="1.00" fill="#dfdfdf" />
<rect x="22.00" y="614.00" width="1130.00" height="1.00" fill="#dfdfdf" />
<rect x="22.00" y="628.00" width="1130.00" height="1.00" fill="#dfdfdf" />
<rect x="0.00" y="100.00" width="1152.00" height="14.00" fill="#e6e5e3" />
<rect x="22.00" y="100.00" width="332.25" height="14.00" fill="#3b86df" />
<line x1="140.50" y1="100.00" x2="140.50" y2="114.00" stroke="#5b9be6" stroke-width="1" />
<text x="81.00" y="109.80" font-size="9" fill="#fff" text-anchor="middle" stroke="#fff" stroke-width="0.12" >A</text>
<line x1="211.50" y1="100.00" x2="211.50" y2="114.00" stroke="#5b9be6" stroke-width="1" />
<text x="175.62" y="109.80" font-size="9" fill="#fff" text-anchor="middle" stroke="#fff" stroke-width="0.12" >B</text>
<line x1="282.50" y1="100.00" x2="282.50" y2="114.00" stroke="#5b9be6" stroke-width="1" />
<text x="246.75" y="109.80" font-size="9" fill="#fff" text-anchor="middle" stroke="#fff" stroke-width="0.12" >C</text>
<line x1="354.50" y1="100.00" x2="354.50" y2="114.00" stroke="#5b9be6" stroke-width="1" />
<text x="318.25" y="109.80" font-size="9" fill="#fff" text-anchor="middle" stroke="#fff" stroke-width="0.12" >D</text>
<rect x="395.00" y="100.00" width="1.00" height="14.00" fill="#cfcecc" />
<text x="374.88" y="109.80" font-size="9" fill="#4a4a4a" text-anchor="middle" stroke="#4a4a4a" stroke-width="0.12" >E</text>
<rect x="436.00" y="100.00" width="1.00" height="14.00" fill="#cfcecc" />
<text x="416.00" y="109.80" font-size="9" fill="#4a4a4a" text-anchor="middle" stroke="#4a4a4a" stroke-width="0.12" >F</text>
<rect x="477.00" y="100.00" width="1.00" height="14.00" fill="#cfcecc" />
<text x="457.00" y="109.80" font-size="9" fill="#4a4a4a" text-anchor="middle" stroke="#4a4a4a" stroke-width="0.12" >G</text>
<rect x="518.00" y="100.00" width="1.00" height="14.00" fill="#cfcecc" />
<text x="498.00" y="109.80" font-size="9" fill="#4a4a4a" text-anchor="middle" stroke="#4a4a4a" stroke-width="0.12" >H</text>
<rect x="560.00" y="100.00" width="1.00" height="14.00" fill="#cfcecc" />
<text x="539.50" y="109.80" font-size="9" fill="#4a4a4a" text-anchor="middle" stroke="#4a4a4a" stroke-width="0.12" >I</text>
<rect x="601.00" y="100.00" width="1.00" height="14.00" fill="#cfcecc" />
<text x="581.00" y="109.80" font-size="9" fill="#4a4a4a" text-anchor="middle" stroke="#4a4a4a" stroke-width="0.12" >J</text>
<rect x="642.00" y="100.00" width="1.00" height="14.00" fill="#cfcecc" />
<text x="622.00" y="109.80" font-size="9" fill="#4a4a4a" text-anchor="middle" stroke="#4a4a4a" stroke-width="0.12" >K</text>
<rect x="684.00" y="100.00" width="1.00" height="14.00" fill="#cfcecc" />
<text x="663.50" y="109.80" font-size="9" fill="#4a4a4a" text-anchor="middle" stroke="#4a4a4a" stroke-width="0.12" >L</text>
<rect x="725.00" y="100.00" width="1.00" height="14.00" fill="#cfcecc" />
<text x="705.00" y="109.80" font-size="9" fill="#4a4a4a" text-anchor="middle" stroke="#4a4a4a" stroke-width="0.12" >M</text>
<rect x="766.00" y="100.00" width="1.00" height="14.00" fill="#cfcecc" />
<text x="746.00" y="109.80" font-size="9" fill="#4a4a4a" text-anchor="middle" stroke="#4a4a4a" stroke-width="0.12" >N</text>
<rect x="807.00" y="100.00" width="1.00" height="14.00" fill="#cfcecc" />
<text x="787.00" y="109.80" font-size="9" fill="#4a4a4a" text-anchor="middle" stroke="#4a4a4a" stroke-width="0.12" >O</text>
<rect x="848.00" y="100.00" width="1.00" height="14.00" fill="#cfcecc" />
<text x="828.00" y="109.80" font-size="9" fill="#4a4a4a" text-anchor="middle" stroke="#4a4a4a" stroke-width="0.12" >P</text>
<rect x="889.00" y="100.00" width="1.00" height="14.00" fill="#cfcecc" />
<text x="869.00" y="109.80" font-size="9" fill="#4a4a4a" text-anchor="middle" stroke="#4a4a4a" stroke-width="0.12" >Q</text>
<rect x="931.00" y="100.00" width="1.00" height="14.00" fill="#cfcecc" />
<text x="910.50" y="109.80" font-size="9" fill="#4a4a4a" text-anchor="middle" stroke="#4a4a4a" stroke-width="0.12" >R</text>
<rect x="972.00" y="100.00" width="1.00" height="14.00" fill="#cfcecc" />
<text x="952.00" y="109.80" font-size="9" fill="#4a4a4a" text-anchor="middle" stroke="#4a4a4a" stroke-width="0.12" >S</text>
<rect x="1013.00" y="100.00" width="1.00" height="14.00" fill="#cfcecc" />
<text x="993.00" y="109.80" font-size="9" fill="#4a4a4a" text-anchor="middle" stroke="#4a4a4a" stroke-width="0.12" >T</text>
<rect x="1054.00" y="100.00" width="1.00" height="14.00" fill="#cfcecc" />
<text x="1034.00" y="109.80" font-size="9" fill="#4a4a4a" text-anchor="middle" stroke="#4a4a4a" stroke-width="0.12" >U</text>
<rect x="1095.00" y="100.00" width="1.00" height="14.00" fill="#cfcecc" />
<text x="1075.00" y="109.80" font-size="9" fill="#4a4a4a" text-anchor="middle" stroke="#4a4a4a" stroke-width="0.12" >V</text>
<rect x="1137.00" y="100.00" width="1.00" height="14.00" fill="#cfcecc" />
<text x="1116.50" y="109.80" font-size="9" fill="#4a4a4a" text-anchor="middle" stroke="#4a4a4a" stroke-width="0.12" >W</text>
<rect x="1152.00" y="100.00" width="1.00" height="14.00" fill="#cfcecc" />
<rect x="0.00" y="113.30" width="1152.00" height="0.80" fill="#cfcecc" />
<rect x="0.00" y="100.00" width="22.00" height="14.00" fill="#f5f4f2" />
<rect x="354.50" y="100.00" width="797.50" height="0.90" fill="#d3d2d0" />
<rect x="0.00" y="114.00" width="22.00" height="518.00" fill="#e6e5e3" />
<rect x="21.30" y="100.00" width="0.80" height="532.00" fill="#cfcecc" />
<rect x="0.00" y="114.00" width="22.00" height="27.00" fill="#3b86df" />
<text x="11.00" y="131.50" font-size="9" fill="#fff" text-anchor="middle" stroke="#fff" stroke-width="0.1" >1</text>
<rect x="0.00" y="141.00" width="22.00" height="1.00" fill="#d2d1cf" />
<text x="11.00" y="152.15" font-size="9" fill="#4a4a4a" text-anchor="middle" stroke="#4a4a4a" stroke-width="0.1" >2</text>
<rect x="0.00" y="155.00" width="22.00" height="1.00" fill="#d2d1cf" />
<text x="11.00" y="170.35" font-size="9" fill="#4a4a4a" text-anchor="middle" stroke="#4a4a4a" stroke-width="0.1" >3</text>
<rect x="0.00" y="177.00" width="22.00" height="1.00" fill="#d2d1cf" />
<text x="11.00" y="188.35" font-size="9" fill="#4a4a4a" text-anchor="middle" stroke="#4a4a4a" stroke-width="0.1" >4</text>
<rect x="0.00" y="191.00" width="22.00" height="1.00" fill="#d2d1cf" />
<text x="11.00" y="202.19" font-size="9" fill="#4a4a4a" text-anchor="middle" stroke="#4a4a4a" stroke-width="0.1" >5</text>
<rect x="0.00" y="205.00" width="22.00" height="1.00" fill="#d2d1cf" />
<text x="11.00" y="215.97" font-size="9" fill="#4a4a4a" text-anchor="middle" stroke="#4a4a4a" stroke-width="0.1" >6</text>
<rect x="0.00" y="219.00" width="22.00" height="1.00" fill="#d2d1cf" />
<text x="11.00" y="229.75" font-size="9" fill="#4a4a4a" text-anchor="middle" stroke="#4a4a4a" stroke-width="0.1" >7</text>
<rect x="0.00" y="233.00" width="22.00" height="1.00" fill="#d2d1cf" />
<text x="11.00" y="243.53" font-size="9" fill="#4a4a4a" text-anchor="middle" stroke="#4a4a4a" stroke-width="0.1" >8</text>
<rect x="0.00" y="246.00" width="22.00" height="1.00" fill="#d2d1cf" />
<text x="11.00" y="257.31" font-size="9" fill="#4a4a4a" text-anchor="middle" stroke="#4a4a4a" stroke-width="0.1" >9</text>
<rect x="0.00" y="260.00" width="22.00" height="1.00" fill="#d2d1cf" />
<text x="11.00" y="271.09" font-size="9" fill="#4a4a4a" text-anchor="middle" stroke="#4a4a4a" stroke-width="0.1" >10</text>
<rect x="0.00" y="274.00" width="22.00" height="1.00" fill="#d2d1cf" />
<text x="11.00" y="284.87" font-size="9" fill="#4a4a4a" text-anchor="middle" stroke="#4a4a4a" stroke-width="0.1" >11</text>
<rect x="0.00" y="288.00" width="22.00" height="1.00" fill="#d2d1cf" />
<text x="11.00" y="298.65" font-size="9" fill="#4a4a4a" text-anchor="middle" stroke="#4a4a4a" stroke-width="0.1" >12</text>
<rect x="0.00" y="302.00" width="22.00" height="1.00" fill="#d2d1cf" />
<text x="11.00" y="312.43" font-size="9" fill="#4a4a4a" text-anchor="middle" stroke="#4a4a4a" stroke-width="0.1" >13</text>
<rect x="0.00" y="315.00" width="22.00" height="1.00" fill="#d2d1cf" />
<text x="11.00" y="326.21" font-size="9" fill="#4a4a4a" text-anchor="middle" stroke="#4a4a4a" stroke-width="0.1" >14</text>
<rect x="0.00" y="329.00" width="22.00" height="1.00" fill="#d2d1cf" />
<text x="11.00" y="339.99" font-size="9" fill="#4a4a4a" text-anchor="middle" stroke="#4a4a4a" stroke-width="0.1" >15</text>
<rect x="0.00" y="343.00" width="22.00" height="1.00" fill="#d2d1cf" />
<text x="11.00" y="353.77" font-size="9" fill="#4a4a4a" text-anchor="middle" stroke="#4a4a4a" stroke-width="0.1" >16</text>
<rect x="0.00" y="357.00" width="22.00" height="1.00" fill="#d2d1cf" />
<text x="11.00" y="367.55" font-size="9" fill="#4a4a4a" text-anchor="middle" stroke="#4a4a4a" stroke-width="0.1" >17</text>
<rect x="0.00" y="370.00" width="22.00" height="1.00" fill="#d2d1cf" />
<text x="11.00" y="381.33" font-size="9" fill="#4a4a4a" text-anchor="middle" stroke="#4a4a4a" stroke-width="0.1" >18</text>
<rect x="0.00" y="384.00" width="22.00" height="1.00" fill="#d2d1cf" />
<text x="11.00" y="395.11" font-size="9" fill="#4a4a4a" text-anchor="middle" stroke="#4a4a4a" stroke-width="0.1" >19</text>
<rect x="0.00" y="398.00" width="22.00" height="1.00" fill="#d2d1cf" />
<text x="11.00" y="413.25" font-size="9" fill="#4a4a4a" text-anchor="middle" stroke="#4a4a4a" stroke-width="0.1" >20</text>
<rect x="0.00" y="420.00" width="22.00" height="1.00" fill="#d2d1cf" />
<text x="11.00" y="431.40" font-size="9" fill="#4a4a4a" text-anchor="middle" stroke="#4a4a4a" stroke-width="0.1" >21</text>
<rect x="0.00" y="434.00" width="22.00" height="1.00" fill="#d2d1cf" />
<text x="11.00" y="445.20" font-size="9" fill="#4a4a4a" text-anchor="middle" stroke="#4a4a4a" stroke-width="0.1" >22</text>
<rect x="0.00" y="448.00" width="22.00" height="1.00" fill="#d2d1cf" />
<text x="11.00" y="459.00" font-size="9" fill="#4a4a4a" text-anchor="middle" stroke="#4a4a4a" stroke-width="0.1" >23</text>
<rect x="0.00" y="462.00" width="22.00" height="1.00" fill="#d2d1cf" />
<text x="11.00" y="472.80" font-size="9" fill="#4a4a4a" text-anchor="middle" stroke="#4a4a4a" stroke-width="0.1" >24</text>
<rect x="0.00" y="476.00" width="22.00" height="1.00" fill="#d2d1cf" />
<text x="11.00" y="486.60" font-size="9" fill="#4a4a4a" text-anchor="middle" stroke="#4a4a4a" stroke-width="0.1" >25</text>
<rect x="0.00" y="490.00" width="22.00" height="1.00" fill="#d2d1cf" />
<text x="11.00" y="500.40" font-size="9" fill="#4a4a4a" text-anchor="middle" stroke="#4a4a4a" stroke-width="0.1" >26</text>
<rect x="0.00" y="503.00" width="22.00" height="1.00" fill="#d2d1cf" />
<text x="11.00" y="514.20" font-size="9" fill="#4a4a4a" text-anchor="middle" stroke="#4a4a4a" stroke-width="0.1" >27</text>
<rect x="0.00" y="517.00" width="22.00" height="1.00" fill="#d2d1cf" />
<text x="11.00" y="528.00" font-size="9" fill="#4a4a4a" text-anchor="middle" stroke="#4a4a4a" stroke-width="0.1" >28</text>
<rect x="0.00" y="531.00" width="22.00" height="1.00" fill="#d2d1cf" />
<text x="11.00" y="541.80" font-size="9" fill="#4a4a4a" text-anchor="middle" stroke="#4a4a4a" stroke-width="0.1" >29</text>
<rect x="0.00" y="545.00" width="22.00" height="1.00" fill="#d2d1cf" />
<text x="11.00" y="555.60" font-size="9" fill="#4a4a4a" text-anchor="middle" stroke="#4a4a4a" stroke-width="0.1" >30</text>
<rect x="0.00" y="558.00" width="22.00" height="1.00" fill="#d2d1cf" />
<text x="11.00" y="569.40" font-size="9" fill="#4a4a4a" text-anchor="middle" stroke="#4a4a4a" stroke-width="0.1" >31</text>
<rect x="0.00" y="572.00" width="22.00" height="1.00" fill="#d2d1cf" />
<text x="11.00" y="583.20" font-size="9" fill="#4a4a4a" text-anchor="middle" stroke="#4a4a4a" stroke-width="0.1" >32</text>
<rect x="0.00" y="586.00" width="22.00" height="1.00" fill="#d2d1cf" />
<text x="11.00" y="597.00" font-size="9" fill="#4a4a4a" text-anchor="middle" stroke="#4a4a4a" stroke-width="0.1" >33</text>
<rect x="0.00" y="600.00" width="22.00" height="1.00" fill="#d2d1cf" />
<text x="11.00" y="610.80" font-size="9" fill="#4a4a4a" text-anchor="middle" stroke="#4a4a4a" stroke-width="0.1" >34</text>
<rect x="0.00" y="614.00" width="22.00" height="1.00" fill="#d2d1cf" />
<text x="11.00" y="624.60" font-size="9" fill="#4a4a4a" text-anchor="middle" stroke="#4a4a4a" stroke-width="0.1" >35</text>
<rect x="0.00" y="628.00" width="22.00" height="1.00" fill="#d2d1cf" />
<rect x="22.00" y="155.50" width="332.25" height="22.10" fill="#1f3b8c" />
<text x="187.70" y="170.30" font-size="11.6" fill="#fff" font-weight="bold" text-anchor="middle" textLength="124.00" lengthAdjust="spacingAndGlyphs" stroke="#fff" stroke-width="0.15" >UMSATZENTWICKLUNG</text>
<path d="M125.70,171.60 q1.325,1.5 2.650,0 t2.650,0 t2.650,0 t2.650,0 t2.650,0 t2.650,0 t2.650,0 t2.650,0 t2.650,0 t2.650,0 t2.650,0 t2.650,0 t2.650,0 t2.650,0 t2.650,0 t2.650,0 t2.650,0 t2.650,0 t2.650,0 t2.650,0 t2.650,0 t2.650,0 t2.650,0 t2.650,0 t2.650,0 t2.650,0 t2.650,0 t2.650,0 t2.650,0 t2.650,0 t2.650,0 t2.650,0 t2.650,0 t2.650,0 t2.650,0 t2.650,0 t2.650,0 t2.650,0 t2.650,0 t2.650,0 t2.650,0 t2.650,0 t2.650,0 t2.650,0 t2.650,0 t2.650,0" fill="none" stroke="#c0392b" stroke-width="1" opacity="0.8"/>
<rect x="22.00" y="177.50" width="332.25" height="13.90" fill="#3f86e8" />
<rect x="140.00" y="177.40" width="1.00" height="13.90" fill="#8db8ee" />
<rect x="211.00" y="177.40" width="1.00" height="13.90" fill="#8db8ee" />
<rect x="282.00" y="177.40" width="1.00" height="13.90" fill="#8db8ee" />
<text x="81.00" y="187.00" font-size="8.4" fill="#fff" font-weight="bold" text-anchor="middle" textLength="25.22" lengthAdjust="spacingAndGlyphs" stroke="#fff" stroke-width="0.15" >Monat</text>
<path d="M68.39,188.30 q1.325,1.5 2.650,0 t2.650,0 t2.650,0 t2.650,0 t2.650,0 t2.650,0 t2.650,0 t2.650,0 t2.650,0" fill="none" stroke="#c0392b" stroke-width="1" opacity="0.8"/>
<text x="175.62" y="187.00" font-size="8.4" fill="#fff" font-weight="bold" text-anchor="middle" textLength="30.47" lengthAdjust="spacingAndGlyphs" stroke="#fff" stroke-width="0.15" >Umsatz</text>
<path d="M160.39,188.30 q1.325,1.5 2.650,0 t2.650,0 t2.650,0 t2.650,0 t2.650,0 t2.650,0 t2.650,0 t2.650,0 t2.650,0 t2.650,0 t2.650,0" fill="none" stroke="#c0392b" stroke-width="1" opacity="0.8"/>
<text x="246.75" y="187.00" font-size="8.4" fill="#fff" font-weight="bold" text-anchor="middle" textLength="29.04" lengthAdjust="spacingAndGlyphs" stroke="#fff" stroke-width="0.15" >Kosten</text>
<path d="M232.23,188.30 q1.325,1.5 2.650,0 t2.650,0 t2.650,0 t2.650,0 t2.650,0 t2.650,0 t2.650,0 t2.650,0 t2.650,0 t2.650,0" fill="none" stroke="#c0392b" stroke-width="1" opacity="0.8"/>
<text x="318.25" y="187.00" font-size="8.4" fill="#fff" font-weight="bold" text-anchor="middle" textLength="30.94" lengthAdjust="spacingAndGlyphs" stroke="#fff" stroke-width="0.15" >Gewinn</text>
<path d="M302.78,188.30 q1.325,1.5 2.650,0 t2.650,0 t2.650,0 t2.650,0 t2.650,0 t2.650,0 t2.650,0 t2.650,0 t2.650,0 t2.650,0 t2.650,0" fill="none" stroke="#c0392b" stroke-width="1" opacity="0.8"/>
<rect x="23.00" y="192.00" width="117.00" height="13.00" fill="#f4f6f9" />
<rect x="141.00" y="192.00" width="70.00" height="13.00" fill="#f4f6f9" />
<rect x="212.00" y="192.00" width="70.00" height="13.00" fill="#f4f6f9" />
<rect x="283.00" y="192.00" width="71.00" height="13.00" fill="#f4f6f9" />
<text x="22.50" y="200.78" font-size="8.8" fill="#222" text-anchor="start" textLength="28.38" lengthAdjust="spacingAndGlyphs" stroke="#222" stroke-width="0.2" >Januar</text>
<path d="M22.50,201.38 q1.325,1.5 2.650,0 t2.650,0 t2.650,0 t2.650,0 t2.650,0 t2.650,0 t2.650,0 t2.650,0 t2.650,0 t2.650,0" fill="none" stroke="#e02a24" stroke-width="1" opacity="0.8"/>
<text x="209.75" y="200.78" font-size="8.8" fill="#222" text-anchor="end" stroke="#222" stroke-width="0.2" >15,617.00 €</text>
<text x="280.75" y="200.78" font-size="8.8" fill="#222" text-anchor="end" stroke="#222" stroke-width="0.2" >14,269.00 €</text>
<text x="352.75" y="200.78" font-size="8.8" fill="#222" text-anchor="end" stroke="#222" stroke-width="0.2" >1,348.00 €</text>
<text x="22.50" y="214.56" font-size="8.8" fill="#222" text-anchor="start" textLength="32.50" lengthAdjust="spacingAndGlyphs" stroke="#222" stroke-width="0.2" >Februar</text>
<path d="M22.50,215.16 q1.325,1.5 2.650,0 t2.650,0 t2.650,0 t2.650,0 t2.650,0 t2.650,0 t2.650,0 t2.650,0 t2.650,0 t2.650,0 t2.650,0 t2.650,0" fill="none" stroke="#e02a24" stroke-width="1" opacity="0.8"/>
<text x="209.75" y="214.56" font-size="8.8" fill="#222" text-anchor="end" stroke="#222" stroke-width="0.2" >16,759.00 €</text>
<text x="280.75" y="214.56" font-size="8.8" fill="#222" text-anchor="end" stroke="#222" stroke-width="0.2" >13,772.00 €</text>
<text x="352.75" y="214.56" font-size="8.8" fill="#222" text-anchor="end" stroke="#222" stroke-width="0.2" >2,987.00 €</text>
<rect x="23.00" y="220.00" width="117.00" height="13.00" fill="#f4f6f9" />
<rect x="141.00" y="220.00" width="70.00" height="13.00" fill="#f4f6f9" />
<rect x="212.00" y="220.00" width="70.00" height="13.00" fill="#f4f6f9" />
<rect x="283.00" y="220.00" width="71.00" height="13.00" fill="#f4f6f9" />
<text x="22.50" y="228.34" font-size="8.8" fill="#222" text-anchor="start" textLength="20.63" lengthAdjust="spacingAndGlyphs" stroke="#222" stroke-width="0.2" >März</text>
<path d="M22.50,228.94 q1.325,1.5 2.650,0 t2.650,0 t2.650,0 t2.650,0 t2.650,0 t2.650,0 t2.650,0" fill="none" stroke="#e02a24" stroke-width="1" opacity="0.8"/>
<text x="209.75" y="228.34" font-size="8.8" fill="#222" text-anchor="end" stroke="#222" stroke-width="0.2" >15,984.00 €</text>
<text x="280.75" y="228.34" font-size="8.8" fill="#222" text-anchor="end" stroke="#222" stroke-width="0.2" >13,260.00 €</text>
<text x="352.75" y="228.34" font-size="8.8" fill="#222" text-anchor="end" stroke="#222" stroke-width="0.2" >2,724.00 €</text>
<text x="22.50" y="242.12" font-size="8.8" fill="#222" text-anchor="start" textLength="18.57" lengthAdjust="spacingAndGlyphs" stroke="#222" stroke-width="0.2" >April</text>
<text x="209.75" y="242.12" font-size="8.8" fill="#222" text-anchor="end" stroke="#222" stroke-width="0.2" >14,969.00 €</text>
<text x="280.75" y="242.12" font-size="8.8" fill="#222" text-anchor="end" stroke="#222" stroke-width="0.2" >13,698.00 €</text>
<text x="352.75" y="242.12" font-size="8.8" fill="#222" text-anchor="end" stroke="#222" stroke-width="0.2" >1,271.00 €</text>
<rect x="23.00" y="247.00" width="117.00" height="13.00" fill="#f4f6f9" />
<rect x="141.00" y="247.00" width="70.00" height="13.00" fill="#f4f6f9" />
<rect x="212.00" y="247.00" width="70.00" height="13.00" fill="#f4f6f9" />
<rect x="283.00" y="247.00" width="71.00" height="13.00" fill="#f4f6f9" />
<text x="22.50" y="255.90" font-size="8.8" fill="#222" text-anchor="start" textLength="14.96" lengthAdjust="spacingAndGlyphs" stroke="#222" stroke-width="0.2" >Mai</text>
<text x="209.75" y="255.90" font-size="8.8" fill="#222" text-anchor="end" stroke="#222" stroke-width="0.2" >17,501.00 €</text>
<text x="280.75" y="255.90" font-size="8.8" fill="#222" text-anchor="end" stroke="#222" stroke-width="0.2" >13,404.00 €</text>
<text x="352.75" y="255.90" font-size="8.8" fill="#222" text-anchor="end" stroke="#222" stroke-width="0.2" >4,097.00 €</text>
<text x="22.50" y="269.68" font-size="8.8" fill="#222" text-anchor="start" textLength="17.03" lengthAdjust="spacingAndGlyphs" stroke="#222" stroke-width="0.2" >Juni</text>
<path d="M22.50,270.28 q1.325,1.5 2.650,0 t2.650,0 t2.650,0 t2.650,0 t2.650,0 t2.650,0" fill="none" stroke="#e02a24" stroke-width="1" opacity="0.8"/>
<text x="209.75" y="269.68" font-size="8.8" fill="#222" text-anchor="end" stroke="#222" stroke-width="0.2" >16,882.00 €</text>
<text x="280.75" y="269.68" font-size="8.8" fill="#222" text-anchor="end" stroke="#222" stroke-width="0.2" >14,033.00 €</text>
<text x="352.75" y="269.68" font-size="8.8" fill="#222" text-anchor="end" stroke="#222" stroke-width="0.2" >2,849.00 €</text>
<rect x="23.00" y="275.00" width="117.00" height="13.00" fill="#f4f6f9" />
<rect x="141.00" y="275.00" width="70.00" height="13.00" fill="#f4f6f9" />
<rect x="212.00" y="275.00" width="70.00" height="13.00" fill="#f4f6f9" />
<rect x="283.00" y="275.00" width="71.00" height="13.00" fill="#f4f6f9" />
<text x="22.50" y="283.46" font-size="8.8" fill="#222" text-anchor="start" textLength="13.93" lengthAdjust="spacingAndGlyphs" stroke="#222" stroke-width="0.2" >Juli</text>
<path d="M22.50,284.06 q1.325,1.5 2.650,0 t2.650,0 t2.650,0 t2.650,0 t2.650,0" fill="none" stroke="#e02a24" stroke-width="1" opacity="0.8"/>
<text x="209.75" y="283.46" font-size="8.8" fill="#222" text-anchor="end" stroke="#222" stroke-width="0.2" >17,478.00 €</text>
<text x="280.75" y="283.46" font-size="8.8" fill="#222" text-anchor="end" stroke="#222" stroke-width="0.2" >14,289.00 €</text>
<text x="352.75" y="283.46" font-size="8.8" fill="#222" text-anchor="end" stroke="#222" stroke-width="0.2" >3,189.00 €</text>
<text x="22.50" y="297.24" font-size="8.8" fill="#222" text-anchor="start" textLength="28.90" lengthAdjust="spacingAndGlyphs" stroke="#222" stroke-width="0.2" >August</text>
<text x="209.75" y="297.24" font-size="8.8" fill="#222" text-anchor="end" stroke="#222" stroke-width="0.2" >17,902.00 €</text>
<text x="280.75" y="297.24" font-size="8.8" fill="#222" text-anchor="end" stroke="#222" stroke-width="0.2" >14,198.00 €</text>
<text x="352.75" y="297.24" font-size="8.8" fill="#222" text-anchor="end" stroke="#222" stroke-width="0.2" >3,704.00 €</text>
<rect x="23.00" y="303.00" width="117.00" height="12.00" fill="#f4f6f9" />
<rect x="141.00" y="303.00" width="70.00" height="12.00" fill="#f4f6f9" />
<rect x="212.00" y="303.00" width="70.00" height="12.00" fill="#f4f6f9" />
<rect x="283.00" y="303.00" width="71.00" height="12.00" fill="#f4f6f9" />
<text x="22.50" y="311.02" font-size="8.8" fill="#222" text-anchor="start" textLength="45.41" lengthAdjust="spacingAndGlyphs" stroke="#222" stroke-width="0.2" >September</text>
<text x="209.75" y="311.02" font-size="8.8" fill="#222" text-anchor="end" stroke="#222" stroke-width="0.2" >15,864.00 €</text>
<text x="280.75" y="311.02" font-size="8.8" fill="#222" text-anchor="end" stroke="#222" stroke-width="0.2" >14,203.00 €</text>
<text x="352.75" y="311.02" font-size="8.8" fill="#222" text-anchor="end" stroke="#222" stroke-width="0.2" >1,661.00 €</text>
<text x="22.50" y="324.80" font-size="8.8" fill="#222" text-anchor="start" textLength="33.02" lengthAdjust="spacingAndGlyphs" stroke="#222" stroke-width="0.2" >Oktober</text>
<path d="M22.50,325.40 q1.325,1.5 2.650,0 t2.650,0 t2.650,0 t2.650,0 t2.650,0 t2.650,0 t2.650,0 t2.650,0 t2.650,0 t2.650,0 t2.650,0 t2.650,0" fill="none" stroke="#e02a24" stroke-width="1" opacity="0.8"/>
<text x="209.75" y="324.80" font-size="8.8" fill="#222" text-anchor="end" stroke="#222" stroke-width="0.2" >17,519.00 €</text>
<text x="280.75" y="324.80" font-size="8.8" fill="#222" text-anchor="end" stroke="#222" stroke-width="0.2" >13,220.00 €</text>
<text x="352.75" y="324.80" font-size="8.8" fill="#222" text-anchor="end" stroke="#222" stroke-width="0.2" >4,299.00 €</text>
<rect x="23.00" y="330.00" width="117.00" height="13.00" fill="#f4f6f9" />
<rect x="141.00" y="330.00" width="70.00" height="13.00" fill="#f4f6f9" />
<rect x="212.00" y="330.00" width="70.00" height="13.00" fill="#f4f6f9" />
<rect x="283.00" y="330.00" width="71.00" height="13.00" fill="#f4f6f9" />
<text x="22.50" y="338.58" font-size="8.8" fill="#222" text-anchor="start" textLength="42.82" lengthAdjust="spacingAndGlyphs" stroke="#222" stroke-width="0.2" >November</text>
<text x="209.75" y="338.58" font-size="8.8" fill="#222" text-anchor="end" stroke="#222" stroke-width="0.2" >14,686.00 €</text>
<text x="280.75" y="338.58" font-size="8.8" fill="#222" text-anchor="end" stroke="#222" stroke-width="0.2" >13,108.00 €</text>
<text x="352.75" y="338.58" font-size="8.8" fill="#222" text-anchor="end" stroke="#222" stroke-width="0.2" >1,578.00 €</text>
<text x="22.50" y="352.36" font-size="8.8" fill="#222" text-anchor="start" textLength="42.82" lengthAdjust="spacingAndGlyphs" stroke="#222" stroke-width="0.2" >Dezember</text>
<path d="M22.50,352.96 q1.325,1.5 2.650,0 t2.650,0 t2.650,0 t2.650,0 t2.650,0 t2.650,0 t2.650,0 t2.650,0 t2.650,0 t2.650,0 t2.650,0 t2.650,0 t2.650,0 t2.650,0 t2.650,0 t2.650,0" fill="none" stroke="#e02a24" stroke-width="1" opacity="0.8"/>
<text x="209.75" y="352.36" font-size="8.8" fill="#222" text-anchor="end" stroke="#222" stroke-width="0.2" >16,944.00 €</text>
<text x="280.75" y="352.36" font-size="8.8" fill="#222" text-anchor="end" stroke="#222" stroke-width="0.2" >13,206.00 €</text>
<text x="352.75" y="352.36" font-size="8.8" fill="#222" text-anchor="end" stroke="#222" stroke-width="0.2" >3,738.00 €</text>
<rect x="21.50" y="356.26" width="333.25" height="14.88" fill="#1f3b8c" />
<rect x="23.00" y="357.86" width="330.25" height="11.78" fill="#3d84ea" />
<rect x="140.00" y="356.66" width="1.00" height="13.78" fill="#1f3b8c" />
<rect x="211.00" y="356.66" width="1.00" height="13.78" fill="#1f3b8c" />
<rect x="282.00" y="356.66" width="1.00" height="13.78" fill="#1f3b8c" />
<text x="22.80" y="365.84" font-size="8.8" fill="#fff" font-weight="bold" text-anchor="start" textLength="35.00" lengthAdjust="spacingAndGlyphs" stroke="#fff" stroke-width="0.15" >GESAMT</text>
<path d="M22.80,366.54 q1.325,1.5 2.650,0 t2.650,0 t2.650,0 t2.650,0 t2.650,0 t2.650,0 t2.650,0 t2.650,0 t2.650,0 t2.650,0 t2.650,0 t2.650,0 t2.650,0" fill="none" stroke="#e02a24" stroke-width="1" opacity="0.8"/>
<text x="209.75" y="366.14" font-size="9.0" fill="#fff" font-weight="bold" text-anchor="end" stroke="#fff" stroke-width="0.15" >198,105.00 €</text>
<text x="280.75" y="366.14" font-size="9.0" fill="#fff" font-weight="bold" text-anchor="end" stroke="#fff" stroke-width="0.15" >164,660.00 €</text>
<text x="352.75" y="366.14" font-size="9.0" fill="#fff" font-weight="bold" text-anchor="end" stroke="#fff" stroke-width="0.15" >33,445.00 €</text>
<rect x="22.00" y="398.50" width="332.25" height="22.50" fill="#1f3b8c" />
<text x="187.70" y="413.40" font-size="11.6" fill="#fff" font-weight="bold" text-anchor="middle" textLength="124.00" lengthAdjust="spacingAndGlyphs" stroke="#fff" stroke-width="0.15" >LEISTUNGSVERTEILUNG</text>
<path d="M125.70,414.70 q1.325,1.5 2.650,0 t2.650,0 t2.650,0 t2.650,0 t2.650,0 t2.650,0 t2.650,0 t2.650,0 t2.650,0 t2.650,0 t2.650,0 t2.650,0 t2.650,0 t2.650,0 t2.650,0 t2.650,0 t2.650,0 t2.650,0 t2.650,0 t2.650,0 t2.650,0 t2.650,0 t2.650,0 t2.650,0 t2.650,0 t2.650,0 t2.650,0 t2.650,0 t2.650,0 t2.650,0 t2.650,0 t2.650,0 t2.650,0 t2.650,0 t2.650,0 t2.650,0 t2.650,0 t2.650,0 t2.650,0 t2.650,0 t2.650,0 t2.650,0 t2.650,0 t2.650,0 t2.650,0 t2.650,0" fill="none" stroke="#c0392b" stroke-width="1" opacity="0.8"/>
<rect x="22.00" y="420.50" width="332.25" height="13.80" fill="#3f86e8" />
<rect x="140.00" y="420.50" width="1.00" height="13.80" fill="#8db8ee" />
<rect x="211.00" y="420.50" width="1.00" height="13.80" fill="#8db8ee" />
<rect x="282.00" y="420.50" width="1.00" height="13.80" fill="#8db8ee" />
<text x="81.00" y="430.00" font-size="8.4" fill="#fff" font-weight="bold" text-anchor="middle" textLength="78.55" lengthAdjust="spacingAndGlyphs" stroke="#fff" stroke-width="0.15" >Leistungskategorie</text>
<path d="M41.72,431.30 q1.325,1.5 2.650,0 t2.650,0 t2.650,0 t2.650,0 t2.650,0 t2.650,0 t2.650,0 t2.650,0 t2.650,0 t2.650,0 t2.650,0 t2.650,0 t2.650,0 t2.650,0 t2.650,0 t2.650,0 t2.650,0 t2.650,0 t2.650,0 t2.650,0 t2.650,0 t2.650,0 t2.650,0 t2.650,0 t2.650,0 t2.650,0 t2.650,0 t2.650,0 t2.650,0" fill="none" stroke="#c0392b" stroke-width="1" opacity="0.8"/>
<text x="175.62" y="430.00" font-size="8.4" fill="#fff" font-weight="bold" text-anchor="middle" textLength="28.08" lengthAdjust="spacingAndGlyphs" stroke="#fff" stroke-width="0.15" >Anzahl</text>
<path d="M161.58,431.30 q1.325,1.5 2.650,0 t2.650,0 t2.650,0 t2.650,0 t2.650,0 t2.650,0 t2.650,0 t2.650,0 t2.650,0 t2.650,0" fill="none" stroke="#c0392b" stroke-width="1" opacity="0.8"/>
<text x="246.75" y="430.00" font-size="8.4" fill="#fff" font-weight="bold" text-anchor="middle" textLength="30.47" lengthAdjust="spacingAndGlyphs" stroke="#fff" stroke-width="0.15" >Umsatz</text>
<path d="M231.51,431.30 q1.325,1.5 2.650,0 t2.650,0 t2.650,0 t2.650,0 t2.650,0 t2.650,0 t2.650,0 t2.650,0 t2.650,0 t2.650,0 t2.650,0" fill="none" stroke="#c0392b" stroke-width="1" opacity="0.8"/>
<text x="318.25" y="430.00" font-size="8.4" fill="#fff" font-weight="bold" text-anchor="middle" textLength="33.80" lengthAdjust="spacingAndGlyphs" stroke="#fff" stroke-width="0.15" >Anteil %</text>
<rect x="23.00" y="435.00" width="117.00" height="13.00" fill="#f4f6f9" />
<rect x="141.00" y="435.00" width="70.00" height="13.00" fill="#f4f6f9" />
<rect x="212.00" y="435.00" width="70.00" height="13.00" fill="#f4f6f9" />
<rect x="283.00" y="435.00" width="71.00" height="13.00" fill="#f4f6f9" />
<text x="22.50" y="443.80" font-size="8.8" fill="#222" text-anchor="start" textLength="80.50" lengthAdjust="spacingAndGlyphs" stroke="#222" stroke-width="0.2" >Damenhaarschnitte</text>
<path d="M22.50,444.40 q1.325,1.5 2.650,0 t2.650,0 t2.650,0 t2.650,0 t2.650,0 t2.650,0 t2.650,0 t2.650,0 t2.650,0 t2.650,0 t2.650,0 t2.650,0 t2.650,0 t2.650,0 t2.650,0 t2.650,0 t2.650,0 t2.650,0 t2.650,0 t2.650,0 t2.650,0 t2.650,0 t2.650,0 t2.650,0 t2.650,0 t2.650,0 t2.650,0 t2.650,0 t2.650,0 t2.650,0" fill="none" stroke="#e02a24" stroke-width="1" opacity="0.8"/>
<text x="209.75" y="443.80" font-size="8.8" fill="#222" text-anchor="end" stroke="#222" stroke-width="0.2" >180</text>
<text x="280.75" y="443.80" font-size="8.8" fill="#222" text-anchor="end" stroke="#222" stroke-width="0.2" >8,640.00 €</text>
<text x="352.75" y="443.80" font-size="8.8" fill="#222" text-anchor="end" textLength="29.70" lengthAdjust="spacingAndGlyphs" stroke="#222" stroke-width="0.2" >33.8%</text>
<text x="22.50" y="457.60" font-size="8.8" fill="#222" text-anchor="start" textLength="78.95" lengthAdjust="spacingAndGlyphs" stroke="#222" stroke-width="0.2" >Herrenhaarschnitte</text>
<path d="M22.50,458.20 q1.325,1.5 2.650,0 t2.650,0 t2.650,0 t2.650,0 t2.650,0 t2.650,0 t2.650,0 t2.650,0 t2.650,0 t2.650,0 t2.650,0 t2.650,0 t2.650,0 t2.650,0 t2.650,0 t2.650,0 t2.650,0 t2.650,0 t2.650,0 t2.650,0 t2.650,0 t2.650,0 t2.650,0 t2.650,0 t2.650,0 t2.650,0 t2.650,0 t2.650,0 t2.650,0" fill="none" stroke="#e02a24" stroke-width="1" opacity="0.8"/>
<text x="209.75" y="457.60" font-size="8.8" fill="#222" text-anchor="end" stroke="#222" stroke-width="0.2" >120</text>
<text x="280.75" y="457.60" font-size="8.8" fill="#222" text-anchor="end" stroke="#222" stroke-width="0.2" >3,360.00 €</text>
<text x="352.75" y="457.60" font-size="8.8" fill="#222" text-anchor="end" textLength="31.30" lengthAdjust="spacingAndGlyphs" stroke="#222" stroke-width="0.2" >#DIV/0!</text>
<rect x="23.00" y="463.00" width="117.00" height="13.00" fill="#f4f6f9" />
<rect x="141.00" y="463.00" width="70.00" height="13.00" fill="#f4f6f9" />
<rect x="212.00" y="463.00" width="70.00" height="13.00" fill="#f4f6f9" />
<rect x="283.00" y="463.00" width="71.00" height="13.00" fill="#f4f6f9" />
<text x="22.50" y="471.40" font-size="8.8" fill="#222" text-anchor="start" textLength="44.90" lengthAdjust="spacingAndGlyphs" stroke="#222" stroke-width="0.2" >Färbungen</text>
<path d="M22.50,472.00 q1.325,1.5 2.650,0 t2.650,0 t2.650,0 t2.650,0 t2.650,0 t2.650,0 t2.650,0 t2.650,0 t2.650,0 t2.650,0 t2.650,0 t2.650,0 t2.650,0 t2.650,0 t2.650,0 t2.650,0" fill="none" stroke="#e02a24" stroke-width="1" opacity="0.8"/>
<text x="209.75" y="471.40" font-size="8.8" fill="#222" text-anchor="end" stroke="#222" stroke-width="0.2" >70</text>
<text x="280.75" y="471.40" font-size="8.8" fill="#222" text-anchor="end" stroke="#222" stroke-width="0.2" >6,020.00 €</text>
<text x="352.75" y="471.40" font-size="8.8" fill="#222" text-anchor="end" textLength="31.30" lengthAdjust="spacingAndGlyphs" stroke="#222" stroke-width="0.2" >#DIV/0!</text>
<text x="22.50" y="485.20" font-size="8.8" fill="#222" text-anchor="start" textLength="37.68" lengthAdjust="spacingAndGlyphs" stroke="#222" stroke-width="0.2" >Strähnen</text>
<path d="M22.50,485.80 q1.325,1.5 2.650,0 t2.650,0 t2.650,0 t2.650,0 t2.650,0 t2.650,0 t2.650,0 t2.650,0 t2.650,0 t2.650,0 t2.650,0 t2.650,0 t2.650,0 t2.650,0" fill="none" stroke="#e02a24" stroke-width="1" opacity="0.8"/>
<text x="209.75" y="485.20" font-size="8.8" fill="#222" text-anchor="end" stroke="#222" stroke-width="0.2" >50</text>
<text x="280.75" y="485.20" font-size="8.8" fill="#222" text-anchor="end" stroke="#222" stroke-width="0.2" >5,000.00 €</text>
<text x="352.75" y="485.20" font-size="8.8" fill="#222" text-anchor="end" textLength="31.30" lengthAdjust="spacingAndGlyphs" stroke="#222" stroke-width="0.2" >#DIV/0!</text>
<rect x="23.00" y="491.00" width="117.00" height="12.00" fill="#f4f6f9" />
<rect x="141.00" y="491.00" width="70.00" height="12.00" fill="#f4f6f9" />
<rect x="212.00" y="491.00" width="70.00" height="12.00" fill="#f4f6f9" />
<rect x="283.00" y="491.00" width="71.00" height="12.00" fill="#f4f6f9" />
<text x="22.50" y="499.00" font-size="8.8" fill="#222" text-anchor="start" textLength="97.56" lengthAdjust="spacingAndGlyphs" stroke="#222" stroke-width="0.2" >Pflege &amp; Behandlungen</text>
<path d="M22.50,499.60 q1.325,1.5 2.650,0 t2.650,0 t2.650,0 t2.650,0 t2.650,0 t2.650,0 t2.650,0 t2.650,0 t2.650,0 t2.650,0 t2.650,0 t2.650,0 t2.650,0 t2.650,0 t2.650,0 t2.650,0 t2.650,0 t2.650,0 t2.650,0 t2.650,0 t2.650,0 t2.650,0 t2.650,0 t2.650,0 t2.650,0 t2.650,0 t2.650,0 t2.650,0 t2.650,0 t2.650,0 t2.650,0 t2.650,0 t2.650,0 t2.650,0 t2.650,0 t2.650,0" fill="none" stroke="#e02a24" stroke-width="1" opacity="0.8"/>
<text x="209.75" y="499.00" font-size="8.8" fill="#222" text-anchor="end" stroke="#222" stroke-width="0.2" >60</text>
<text x="280.75" y="499.00" font-size="8.8" fill="#222" text-anchor="end" stroke="#222" stroke-width="0.2" >2,580.00 €</text>
<text x="352.75" y="499.00" font-size="8.8" fill="#222" text-anchor="end" textLength="31.30" lengthAdjust="spacingAndGlyphs" stroke="#222" stroke-width="0.2" >#DIV/0!</text>
<rect x="21.50" y="502.90" width="333.25" height="14.90" fill="#1f3b8c" />
<rect x="23.00" y="504.50" width="330.25" height="11.80" fill="#3d84ea" />
<rect x="140.00" y="503.30" width="1.00" height="13.80" fill="#1f3b8c" />
<rect x="211.00" y="503.30" width="1.00" height="13.80" fill="#1f3b8c" />
<rect x="282.00" y="503.30" width="1.00" height="13.80" fill="#1f3b8c" />
<text x="22.80" y="512.50" font-size="8.8" fill="#fff" font-weight="bold" text-anchor="start" textLength="35.00" lengthAdjust="spacingAndGlyphs" stroke="#fff" stroke-width="0.15" >GESAMT</text>
<path d="M22.80,513.20 q1.325,1.5 2.650,0 t2.650,0 t2.650,0 t2.650,0 t2.650,0 t2.650,0 t2.650,0 t2.650,0 t2.650,0 t2.650,0 t2.650,0 t2.650,0 t2.650,0" fill="none" stroke="#e02a24" stroke-width="1" opacity="0.8"/>
<text x="209.75" y="512.80" font-size="9.0" fill="#fff" font-weight="bold" text-anchor="end" stroke="#fff" stroke-width="0.15" >480</text>
<text x="280.75" y="512.80" font-size="9.0" fill="#fff" font-weight="bold" text-anchor="end" stroke="#fff" stroke-width="0.15" >25,600.00 €</text>
<text x="352.75" y="512.80" font-size="9.0" fill="#fff" font-weight="bold" text-anchor="end" textLength="33.00" lengthAdjust="spacingAndGlyphs" stroke="#fff" stroke-width="0.15" >#DIV/0!</text>
<rect x="23.00" y="115.00" width="330.00" height="25.50" fill="#fff" />
<text x="23.00" y="131.50" font-size="15" fill="#27448e" font-weight="bold" text-anchor="start" textLength="190.00" lengthAdjust="spacingAndGlyphs" stroke="#27448e" stroke-width="0.15" >MONATLICHE AUSWERTUNG</text>
<path d="M23.00,133.30 q1.325,1.5 2.650,0 t2.650,0 t2.650,0 t2.650,0 t2.650,0 t2.650,0 t2.650,0 t2.650,0 t2.650,0 t2.650,0 t2.650,0 t2.650,0 t2.650,0 t2.650,0 t2.650,0 t2.650,0 t2.650,0 t2.650,0 t2.650,0 t2.650,0 t2.650,0 t2.650,0 t2.650,0 t2.650,0 t2.650,0 t2.650,0 t2.650,0 t2.650,0 t2.650,0 t2.650,0 t2.650,0 t2.650,0 t2.650,0 t2.650,0 t2.650,0 t2.650,0 t2.650,0 t2.650,0 t2.650,0 t2.650,0 t2.650,0 t2.650,0 t2.650,0 t2.650,0 t2.650,0 t2.650,0 t2.650,0 t2.650,0 t2.650,0 t2.650,0 t2.650,0 t2.650,0 t2.650,0 t2.650,0 t2.650,0 t2.650,0 t2.650,0 t2.650,0 t2.650,0 t2.650,0 t2.650,0 t2.650,0 t2.650,0 t2.650,0 t2.650,0 t2.650,0 t2.650,0 t2.650,0 t2.650,0 t2.650,0 t2.650,0" fill="none" stroke="#e02a24" stroke-width="1" opacity="0.8"/>
<path d="M22.5,114 V141.5 H354.5 V114" fill="none" stroke="#3a6fb5" stroke-width="1"/>
<rect x="352.80" y="140.00" width="3.20" height="3.20" fill="#3a7fd0" />
<rect x="395.4" y="155.4" width="484.8" height="311.8" fill="#fff" stroke="#d8d8d8" stroke-width="0.8"/>
<line x1="470.60" y1="203.30" x2="812.20" y2="203.30" stroke="#b3b3b3" stroke-width="0.9" />
<text x="468.80" y="205.80" font-size="7.2" fill="#222" text-anchor="end" stroke="#222" stroke-width="0.15" >20,000.00 €</text>
<line x1="470.60" y1="222.83" x2="812.20" y2="222.83" stroke="#b3b3b3" stroke-width="0.9" />
<text x="468.80" y="225.33" font-size="7.2" fill="#222" text-anchor="end" stroke="#222" stroke-width="0.15" >18,000.00 €</text>
<line x1="470.60" y1="242.36" x2="812.20" y2="242.36" stroke="#b3b3b3" stroke-width="0.9" />
<text x="468.80" y="244.86" font-size="7.2" fill="#222" text-anchor="end" stroke="#222" stroke-width="0.15" >16,000.00 €</text>
<line x1="470.60" y1="261.89" x2="812.20" y2="261.89" stroke="#b3b3b3" stroke-width="0.9" />
<text x="468.80" y="264.39" font-size="7.2" fill="#222" text-anchor="end" stroke="#222" stroke-width="0.15" >14,000.00 €</text>
<line x1="470.60" y1="281.42" x2="812.20" y2="281.42" stroke="#b3b3b3" stroke-width="0.9" />
<text x="468.80" y="283.92" font-size="7.2" fill="#222" text-anchor="end" stroke="#222" stroke-width="0.15" >12,000.00 €</text>
<line x1="470.60" y1="300.95" x2="812.20" y2="300.95" stroke="#b3b3b3" stroke-width="0.9" />
<text x="468.80" y="303.45" font-size="7.2" fill="#222" text-anchor="end" stroke="#222" stroke-width="0.15" >10,000.00 €</text>
<line x1="470.60" y1="320.48" x2="812.20" y2="320.48" stroke="#b3b3b3" stroke-width="0.9" />
<text x="468.80" y="322.98" font-size="7.2" fill="#222" text-anchor="end" stroke="#222" stroke-width="0.15" >8,000.00 €</text>
<line x1="470.60" y1="340.01" x2="812.20" y2="340.01" stroke="#b3b3b3" stroke-width="0.9" />
<text x="468.80" y="342.51" font-size="7.2" fill="#222" text-anchor="end" stroke="#222" stroke-width="0.15" >6,000.00 €</text>
<line x1="470.60" y1="359.54" x2="812.20" y2="359.54" stroke="#b3b3b3" stroke-width="0.9" />
<text x="468.80" y="362.04" font-size="7.2" fill="#222" text-anchor="end" stroke="#222" stroke-width="0.15" >4,000.00 €</text>
<line x1="470.60" y1="379.07" x2="812.20" y2="379.07" stroke="#b3b3b3" stroke-width="0.9" />
<text x="468.80" y="381.57" font-size="7.2" fill="#222" text-anchor="end" stroke="#222" stroke-width="0.15" >2,000.00 €</text>
<line x1="470.60" y1="398.60" x2="812.20" y2="398.60" stroke="#b3b3b3" stroke-width="0.9" />
<text x="468.80" y="401.10" font-size="7.2" fill="#222" text-anchor="end" stroke="#222" stroke-width="0.15" >0.00 €</text>
<line x1="472.60" y1="203.30" x2="472.60" y2="398.60" stroke="#b3b3b3" stroke-width="0.9" />
<text x="638.00" y="182.60" font-size="14.4" fill="#111" font-weight="bold" text-anchor="middle" textLength="206.00" lengthAdjust="spacingAndGlyphs" stroke="#111" stroke-width="0.15" >Umsatz- und Kostenentwicklung</text>
<text x="0" y="0" font-size="7.2" font-weight="bold" fill="#111" text-anchor="middle" transform="translate(416.2,317) rotate(-90)" textLength="40" lengthAdjust="spacingAndGlyphs">Betrag in €</text>
<polyline fill="none" stroke="#4f81bd" stroke-width="1.15" points="486.75,246.10 489.11,244.84 491.47,243.59 493.83,242.37 496.18,241.19 498.54,240.07 500.90,239.02 503.26,238.05 505.62,237.18 507.98,236.42 510.33,235.79 512.69,235.29 515.05,234.95 517.41,234.77 519.77,234.75 522.12,234.90 524.48,235.19 526.84,235.64 529.20,236.22 531.56,236.95 533.92,237.81 536.28,238.80 538.63,239.92 540.99,241.16 543.35,242.52 545.71,243.98 548.07,245.49 550.42,247.02 552.78,248.50 555.14,249.88 557.50,251.11 559.86,252.14 562.22,252.92 564.58,253.39 566.93,253.50 569.29,253.19 571.65,252.43 574.01,251.17 576.37,249.48 578.73,247.44 581.08,245.15 583.44,242.68 585.80,240.12 588.16,237.56 590.52,235.08 592.88,232.77 595.23,230.71 597.59,228.99 599.95,227.70 602.31,226.90 604.67,226.54 607.03,226.57 609.38,226.91 611.74,227.52 614.10,228.33 616.46,229.26 618.82,230.27 621.17,231.29 623.53,232.25 625.89,233.09 628.25,233.75 630.61,234.18 632.97,234.38 635.33,234.38 637.68,234.18 640.04,233.81 642.40,233.29 644.76,232.63 647.12,231.86 649.48,230.98 651.83,230.02 654.19,229.00 656.55,227.93 658.91,226.83 661.27,225.75 663.62,224.71 665.98,223.75 668.34,222.92 670.70,222.26 673.06,221.79 675.42,221.56 677.78,221.61 680.13,221.97 682.49,222.68 684.85,223.79 687.21,225.30 689.57,227.15 691.93,229.24 694.28,231.48 696.64,233.78 699.00,236.04 701.36,238.18 703.72,240.09 706.08,241.69 708.43,242.89 710.79,243.58 713.15,243.69 715.51,243.14 717.87,242.04 720.23,240.50 722.58,238.64 724.94,236.60 727.30,234.50 729.66,232.46 732.02,230.60 734.38,229.06 736.73,227.95 739.09,227.40 741.45,227.53 743.81,228.42 746.17,230.00 748.53,232.13 750.88,234.69 753.24,237.54 755.60,240.57 757.96,243.64 760.32,246.62 762.67,249.40 765.03,251.84 767.39,253.81 769.75,255.19 772.11,255.88 774.47,255.91 776.83,255.35 779.18,254.24 781.54,252.65 783.90,250.64 786.26,248.28 788.62,245.61 790.97,242.70 793.33,239.62 795.69,236.41 798.05,233.14"/>
<polyline fill="none" stroke="#c0504d" stroke-width="1.15" points="486.75,259.26 489.11,259.59 491.47,259.93 493.83,260.27 496.18,260.62 498.54,260.98 500.90,261.36 503.26,261.75 505.62,262.17 507.98,262.61 510.33,263.08 512.69,263.58 515.05,264.12 517.41,264.69 519.77,265.28 522.12,265.88 524.48,266.47 526.84,267.04 529.20,267.57 531.56,268.04 533.92,268.45 536.28,268.78 538.63,269.01 540.99,269.13 543.35,269.12 545.71,268.97 548.07,268.70 550.42,268.34 552.78,267.91 555.14,267.44 557.50,266.94 559.86,266.44 562.22,265.97 564.58,265.55 566.93,265.21 569.29,264.96 571.65,264.84 574.01,264.85 576.37,264.99 578.73,265.23 581.08,265.54 583.44,265.90 585.80,266.28 588.16,266.66 590.52,267.02 592.88,267.33 595.23,267.56 597.59,267.70 599.95,267.71 602.31,267.58 604.67,267.33 607.03,266.96 609.38,266.50 611.74,265.96 614.10,265.36 616.46,264.73 618.82,264.07 621.17,263.41 623.53,262.76 625.89,262.14 628.25,261.57 630.61,261.06 632.97,260.62 635.33,260.24 637.68,259.91 640.04,259.64 642.40,259.43 644.76,259.26 647.12,259.14 649.48,259.06 651.83,259.03 654.19,259.03 656.55,259.07 658.91,259.14 661.27,259.23 663.62,259.34 665.98,259.46 668.34,259.59 670.70,259.71 673.06,259.82 675.42,259.91 677.78,259.98 680.13,260.02 682.49,260.01 684.85,259.96 687.21,259.85 689.57,259.71 691.93,259.55 694.28,259.38 696.64,259.23 699.00,259.11 701.36,259.03 703.72,259.01 706.08,259.08 708.43,259.23 710.79,259.51 713.15,259.91 715.51,260.45 717.87,261.11 720.23,261.88 722.58,262.72 724.94,263.61 727.30,264.54 729.66,265.48 732.02,266.40 734.38,267.29 736.73,268.12 739.09,268.87 741.45,269.51 743.81,270.03 746.17,270.43 748.53,270.73 750.88,270.93 753.24,271.05 755.60,271.11 757.96,271.10 760.32,271.05 762.67,270.96 765.03,270.85 767.39,270.73 769.75,270.60 772.11,270.48 774.47,270.38 776.83,270.28 779.18,270.19 781.54,270.10 783.90,270.03 786.26,269.95 788.62,269.89 790.97,269.82 793.33,269.76 795.69,269.70 798.05,269.64"/>
<polyline fill="none" stroke="#9bbb59" stroke-width="1.15" points="486.75,385.44 489.11,383.85 491.47,382.26 493.83,380.71 496.18,379.18 498.54,377.69 500.90,376.27 503.26,374.90 505.62,373.61 507.98,372.41 510.33,371.31 512.69,370.31 515.05,369.43 517.41,368.68 519.77,368.08 522.12,367.62 524.48,367.32 526.84,367.20 529.20,367.26 531.56,367.51 533.92,367.96 536.28,368.62 538.63,369.51 540.99,370.63 543.35,372.00 545.71,373.61 548.07,375.39 550.42,377.28 552.78,379.19 555.14,381.04 557.50,382.77 559.86,384.30 562.22,385.55 564.58,386.43 566.93,386.89 569.29,386.83 571.65,386.19 574.01,384.91 576.37,383.08 578.73,380.81 581.08,378.21 583.44,375.38 585.80,372.44 588.16,369.50 590.52,366.66 592.88,364.04 595.23,361.75 597.59,359.90 599.95,358.59 602.31,357.91 604.67,357.81 607.03,358.21 609.38,359.02 611.74,360.16 614.10,361.56 616.46,363.14 618.82,364.80 621.17,366.48 623.53,368.09 625.89,369.55 628.25,370.78 630.61,371.72 632.97,372.36 635.33,372.74 637.68,372.87 640.04,372.77 642.40,372.46 644.76,371.97 647.12,371.32 649.48,370.52 651.83,369.59 654.19,368.57 656.55,367.46 658.91,366.29 661.27,365.11 663.62,363.96 665.98,362.89 668.34,361.93 670.70,361.14 673.06,360.57 675.42,360.25 677.78,360.23 680.13,360.55 682.49,361.27 684.85,362.43 687.21,364.05 689.57,366.03 691.93,368.29 694.28,370.69 696.64,373.15 699.00,375.53 701.36,377.75 703.72,379.68 706.08,381.22 708.43,382.25 710.79,382.68 713.15,382.38 715.51,381.30 717.87,379.53 720.23,377.22 722.58,374.53 724.94,371.59 727.30,368.56 729.66,365.58 732.02,362.80 734.38,360.37 736.73,358.43 739.09,357.13 741.45,356.62 743.81,357.00 746.17,358.17 748.53,360.00 750.88,362.36 753.24,365.09 755.60,368.06 757.96,371.14 760.32,374.17 762.67,377.04 765.03,379.59 767.39,381.69 769.75,383.19 772.11,384.00 774.47,384.14 776.83,383.67 779.18,382.65 781.54,381.15 783.90,379.22 786.26,376.92 788.62,374.32 790.97,371.48 793.33,368.45 795.69,365.31 798.05,362.10"/>
<line x1="825.20" y1="300.50" x2="844.00" y2="300.50" stroke="#4f81bd" stroke-width="1" />
<text x="846.70" y="302.50" font-size="8.4" fill="#222" text-anchor="start" textLength="24.58" lengthAdjust="spacingAndGlyphs" stroke="#222" stroke-width="0.15" >Umsatz</text>
<line x1="825.20" y1="312.20" x2="844.00" y2="312.20" stroke="#c0504d" stroke-width="1" />
<text x="846.70" y="314.20" font-size="8.4" fill="#222" text-anchor="start" textLength="22.58" lengthAdjust="spacingAndGlyphs" stroke="#222" stroke-width="0.15" >Kosten</text>
<line x1="825.20" y1="323.50" x2="844.00" y2="323.50" stroke="#9bbb59" stroke-width="1" />
<text x="846.70" y="325.50" font-size="8.4" fill="#222" text-anchor="start" textLength="24.59" lengthAdjust="spacingAndGlyphs" stroke="#222" stroke-width="0.15" >Gewinn</text>
<text x="0" y="0" font-size="8" fill="#222" stroke="#222" stroke-width="0.2" text-anchor="end" transform="translate(800.5,406) rotate(-45)">September</text>
<defs><clipPath id="gclip"><rect x="22" y="114" width="1130" height="518.2"/></clipPath></defs><g clip-path="url(#gclip)">
<rect x="395.4" y="399.3" width="388.2" height="300.7" fill="#fff" stroke="#d8d8d8" stroke-width="0.8"/>
<text x="590.00" y="425.60" font-size="14.4" fill="#111" font-weight="bold" text-anchor="middle" textLength="204.00" lengthAdjust="spacingAndGlyphs" stroke="#111" stroke-width="0.15" >Umsatzverteilung nach Leistung</text>
<path d="M541.1,573.3 L541.10,444.70 A119.6,128.6 0 0 1 643.08,640.49 Z" fill="#4f81bd" stroke="#fff" stroke-width="1"/>
<path d="M541.1,573.3 L643.08,640.49 A119.6,128.6 0 0 1 564.43,699.43 Z" fill="#c0504d" stroke="#fff" stroke-width="1"/>
<path d="M541.1,573.3 L564.43,699.43 A119.6,128.6 0 0 1 426.48,610.03 Z" fill="#9bbb59" stroke="#fff" stroke-width="1"/>
<path d="M541.1,573.3 L426.48,610.03 A119.6,128.6 0 0 1 470.33,469.63 Z" fill="#8064a2" stroke="#fff" stroke-width="1"/>
<path d="M541.1,573.3 L470.33,469.63 A119.6,128.6 0 0 1 541.10,444.70 Z" fill="#4bacc6" stroke="#fff" stroke-width="1"/>
<rect x="689.30" y="529.30" width="4.70" height="4.70" fill="#4f81bd" />
<text x="696.20" y="534.70" font-size="9.2" fill="#222" text-anchor="start" textLength="66.62" lengthAdjust="spacingAndGlyphs" stroke="#222" stroke-width="0.15" >Damenhaarschnitte</text>
<rect x="689.30" y="540.80" width="4.70" height="4.70" fill="#c0504d" />
<text x="696.20" y="546.20" font-size="9.2" fill="#222" text-anchor="start" textLength="65.33" lengthAdjust="spacingAndGlyphs" stroke="#222" stroke-width="0.15" >Herrenhaarschnitte</text>
<rect x="689.30" y="552.30" width="4.70" height="4.70" fill="#9bbb59" />
<text x="696.20" y="557.70" font-size="9.2" fill="#222" text-anchor="start" textLength="37.16" lengthAdjust="spacingAndGlyphs" stroke="#222" stroke-width="0.15" >Färbungen</text>
<rect x="689.30" y="563.80" width="4.70" height="4.70" fill="#8064a2" />
<text x="696.20" y="569.20" font-size="9.2" fill="#222" text-anchor="start" textLength="31.18" lengthAdjust="spacingAndGlyphs" stroke="#222" stroke-width="0.15" >Strähnen</text>
<rect x="689.30" y="575.30" width="4.70" height="4.70" fill="#4bacc6" />
<text x="696.20" y="580.70" font-size="9.2" fill="#222" text-anchor="start" textLength="80.73" lengthAdjust="spacingAndGlyphs" stroke="#222" stroke-width="0.15" >Pflege &amp; Behandlungen</text>
</g>
<rect x="0.00" y="632.20" width="1152.00" height="9.50" fill="#cfcfcf" />
<rect x="2" y="634.2" width="545.5" height="5.5" rx="2.75" fill="#7f8081"/>
<rect x="1152.00" y="100.00" width="9.00" height="532.20" fill="#cfcfcf" />
<rect x="1153.7" y="105.8" width="5.4" height="252" rx="2.7" fill="#808080"/>
<rect x="1153" y="100.8" width="6" height="1.5" rx="0.7" fill="#444"/>
<rect x="1148.5" y="634.5" width="1.2" height="5" fill="#444"/>
<rect x="1161.30" y="70.50" width="38.70" height="587.50" fill="#f5f4f2" />
<line x1="1161.50" y1="70.00" x2="1161.50" y2="658.00" stroke="#d9d8d6" stroke-width="1" />
<rect x="1161.00" y="339.00" width="4.30" height="49.70" fill="#8a8a8a" />
<path d="M1162,361 L1164.5,363.8 L1162,366.6 Z" fill="#fff"/>
<path d="M1177,81.5 H1186 M1177,85 H1186 M1177,88.5 H1186" stroke="#333" stroke-width="1.4"/>
<rect x="1175.8" y="108.5" width="11.6" height="12.3" fill="#fff" stroke="#666" stroke-width="1"/><rect x="1175.3" y="108" width="12.6" height="2.3" fill="#555"/><path d="M1177.8,114.3 H1185.4 M1177.8,117.6 H1185.4" stroke="#3a6fb0" stroke-width="0.9"/><path d="M1182.8,113 V115.6 M1180.3,116.3 V118.9" stroke="#3a6fb0" stroke-width="1"/>
<text x="1175.3" y="147.8" font-size="13.5" fill="#333">A</text><path d="M1182.6,148.2 L1188.3,141.6" stroke="#555" stroke-width="2.4" stroke-linecap="round"/><path d="M1182.6,148.2 L1188.3,141.6" stroke="#fff" stroke-width="1.1" stroke-linecap="round"/><path d="M1178.6,152 Q1179.2,148.4 1181.6,147.6 Q1183.6,148.6 1182.8,150.2 Q1181,152.2 1178.6,152 Z" fill="#3d8fd6"/>
<path d="M1175.8,167 H1180 L1181.5,168.5 H1188 V179.5 H1175.8 Z" fill="#fbd58a" stroke="#e8a44a" stroke-width="0.9"/><rect x="1180" y="171" width="8.5" height="9" fill="#fff" stroke="#3d7fc0" stroke-width="0.8"/><path d="M1180.5,179.5 L1183,175.5 L1185,177.5 L1186.5,176 L1188.5,179.5 Z" fill="#3d8fd6"/>
<circle cx="1182" cy="202.3" r="5.6" fill="#fff" stroke="#444" stroke-width="1"/><path d="M1184.8,199.5 L1183,203.8 L1179.2,205.1 L1181,200.8 Z" fill="#3d8fd6"/>
<g fill="none" stroke="#3d8fd6" stroke-width="1.1" stroke-linecap="round"><path d="M1184.2,225.6 Q1183.6,224.2 1182.3,224.6 Q1181,225 1180.6,227.5 L1179.4,235.5 Q1179,238 1177.6,238 Q1176.6,238 1176.3,237"/><path d="M1178.3,229.3 H1182.6"/><path d="M1182.3,230.5 Q1183.2,230 1183.7,231 L1186,236.8 Q1186.5,237.8 1187.6,237.2 M1187.8,230.6 L1181.8,237.4"/></g>
<rect x="0.00" y="641.70" width="1152.00" height="16.00" fill="#f5f4f2" />
<g stroke="#d2d2d2" fill="none" stroke-width="1.3" stroke-linejoin="round"><path d="M6.7,644 V655.5 M16.5,644.5 L11,650 L16.5,655.5"/><circle cx="16.8" cy="650" r="0.8"/><path d="M21.5,646.5 V653.5 M27.5,646.5 L23,650 L27.5,653.5 Z M33.5,646.5 L29,650 L33.5,653.5 Z"/><path d="M37.5,646.5 L42,650 L37.5,653.5 Z M43.5,646.5 L48,650 L43.5,653.5 Z M50.5,646.5 V653.5"/><path d="M55.5,644.5 L61,650 L55.5,655.5 M64.6,644 V655.5"/><circle cx="54.5" cy="650" r="0.8"/></g>
<path d="M75,643.4 H82 L84.2,645.6 V657.2 H75 Z" fill="#fff" stroke="#e2e2e2" stroke-width="0.6"/><circle cx="84.6" cy="648.8" r="2.4" fill="#dbe6f3" stroke="#3d6fb0" stroke-width="1.1"/><path d="M83.3,648.8 H85.9 M84.6,647.5 V650.1" stroke="#3d6fb0" stroke-width="0.8"/>
<text x="102.50" y="652.00" font-size="8.8" fill="#3a3a3a" text-anchor="start" textLength="40.50" lengthAdjust="spacingAndGlyphs" stroke="#3a3a3a" stroke-width="0.15" >Kalkulation</text>
<text x="163.30" y="652.00" font-size="8.8" fill="#3a3a3a" text-anchor="start" textLength="33.70" lengthAdjust="spacingAndGlyphs" stroke="#3a3a3a" stroke-width="0.15" >Preisliste</text>
<text x="217.50" y="652.00" font-size="8.8" fill="#3a3a3a" text-anchor="start" textLength="59.50" lengthAdjust="spacingAndGlyphs" stroke="#3a3a3a" stroke-width="0.15" >Kostenübersicht</text>
<text x="363.00" y="652.00" font-size="8.8" fill="#3a3a3a" text-anchor="start" textLength="35.00" lengthAdjust="spacingAndGlyphs" stroke="#3a3a3a" stroke-width="0.15" >Anleitung</text>
<line x1="153.80" y1="645.00" x2="153.80" y2="655.00" stroke="#cfcfcf" stroke-width="1" />
<line x1="206.50" y1="645.00" x2="206.50" y2="655.00" stroke="#cfcfcf" stroke-width="1" />
<line x1="289.30" y1="645.00" x2="289.30" y2="655.00" stroke="#cfcfcf" stroke-width="1" />
<line x1="409.30" y1="645.00" x2="409.30" y2="655.00" stroke="#cfcfcf" stroke-width="1" />
<rect x="288.80" y="641.70" width="65.00" height="15.00" fill="#fafafa" />
<text x="297.00" y="652.00" font-size="8.8" fill="#222" font-weight="bold" text-anchor="start" textLength="47.50" lengthAdjust="spacingAndGlyphs" stroke="#222" stroke-width="0.15" >Auswertung</text>
<line x1="289.30" y1="645.00" x2="289.30" y2="655.00" stroke="#cfcfcf" stroke-width="1" />
<rect x="289.00" y="655.60" width="64.50" height="2.00" fill="#7a7a7a" />
<line x1="0.00" y1="658.00" x2="1200.00" y2="658.00" stroke="#dddcda" stroke-width="1" />
<rect x="7" y="661.5" width="9.5" height="10" rx="1" fill="none" stroke="#888" stroke-width="1"/><rect x="9" y="661.5" width="5.5" height="3" fill="none" stroke="#888" stroke-width="0.8"/><rect x="9" y="667.5" width="5.5" height="4" fill="none" stroke="#888" stroke-width="0.8"/>
<text x="27.50" y="670.20" font-size="8.8" fill="#333" text-anchor="start" textLength="43.30" lengthAdjust="spacingAndGlyphs" stroke="#333" stroke-width="0.2" >Sheet 4 of 5</text>
<text x="182.70" y="670.20" font-size="8.8" fill="#333" text-anchor="start" textLength="98.30" lengthAdjust="spacingAndGlyphs" stroke="#333" stroke-width="0.2" >Selected: 1 row, 4 columns</text>
<text x="398.80" y="670.20" font-size="8.8" fill="#333" text-anchor="start" textLength="83.70" lengthAdjust="spacingAndGlyphs" stroke="#333" stroke-width="0.2" >PageStyle_Auswertung</text>
<text x="666.50" y="670.20" font-size="8.8" fill="#333" text-anchor="start" textLength="50.00" lengthAdjust="spacingAndGlyphs" stroke="#333" stroke-width="0.2" >English (USA)</text>
<text x="950.00" y="670.20" font-size="8.8" fill="#333" text-anchor="start" textLength="64.00" lengthAdjust="spacingAndGlyphs" stroke="#333" stroke-width="0.2" >Average: ; Sum: 0</text>
<text x="1173.30" y="670.20" font-size="8.8" fill="#333" text-anchor="start" textLength="20.00" lengthAdjust="spacingAndGlyphs" stroke="#333" stroke-width="0.2" >100%</text>
<line x1="176.70" y1="660.00" x2="176.70" y2="674.00" stroke="#e2e1df" stroke-width="1" />
<line x1="393.50" y1="660.00" x2="393.50" y2="674.00" stroke="#e2e1df" stroke-width="1" />
<line x1="608.00" y1="660.00" x2="608.00" y2="674.00" stroke="#e2e1df" stroke-width="1" />
<line x1="774.50" y1="660.00" x2="774.50" y2="674.00" stroke="#e2e1df" stroke-width="1" />
<line x1="818.80" y1="660.00" x2="818.80" y2="674.00" stroke="#e2e1df" stroke-width="1" />
<line x1="850.50" y1="660.00" x2="850.50" y2="674.00" stroke="#e2e1df" stroke-width="1" />
<line x1="871.30" y1="660.00" x2="871.30" y2="674.00" stroke="#e2e1df" stroke-width="1" />
<line x1="891.30" y1="660.00" x2="891.30" y2="674.00" stroke="#e2e1df" stroke-width="1" />
<line x1="1071.80" y1="660.00" x2="1071.80" y2="674.00" stroke="#e2e1df" stroke-width="1" />
<line x1="1168.80" y1="660.00" x2="1168.80" y2="674.00" stroke="#e2e1df" stroke-width="1" />
<rect x="827.5" y="664.5" width="10.7" height="5.8" fill="none" stroke="#3d8fd6" stroke-width="1"/>
<path d="M841.5,662.5 H845 M843.3,662.5 V672.5 M841.5,672.5 H845" stroke="#333" stroke-width="0.9"/>
<path d="M1077.5,667.3 H1084" stroke="#333" stroke-width="1.2"/><path d="M1088,667.3 H1152.5" stroke="#999" stroke-width="0.8"/><rect x="1118" y="664" width="2.3" height="6.7" fill="#fff" stroke="#444" stroke-width="0.8"/><path d="M1155.8,667.3 H1162.5 M1159.2,664 V670.6" stroke="#333" stroke-width="1.2"/>
</svg></body></html>
